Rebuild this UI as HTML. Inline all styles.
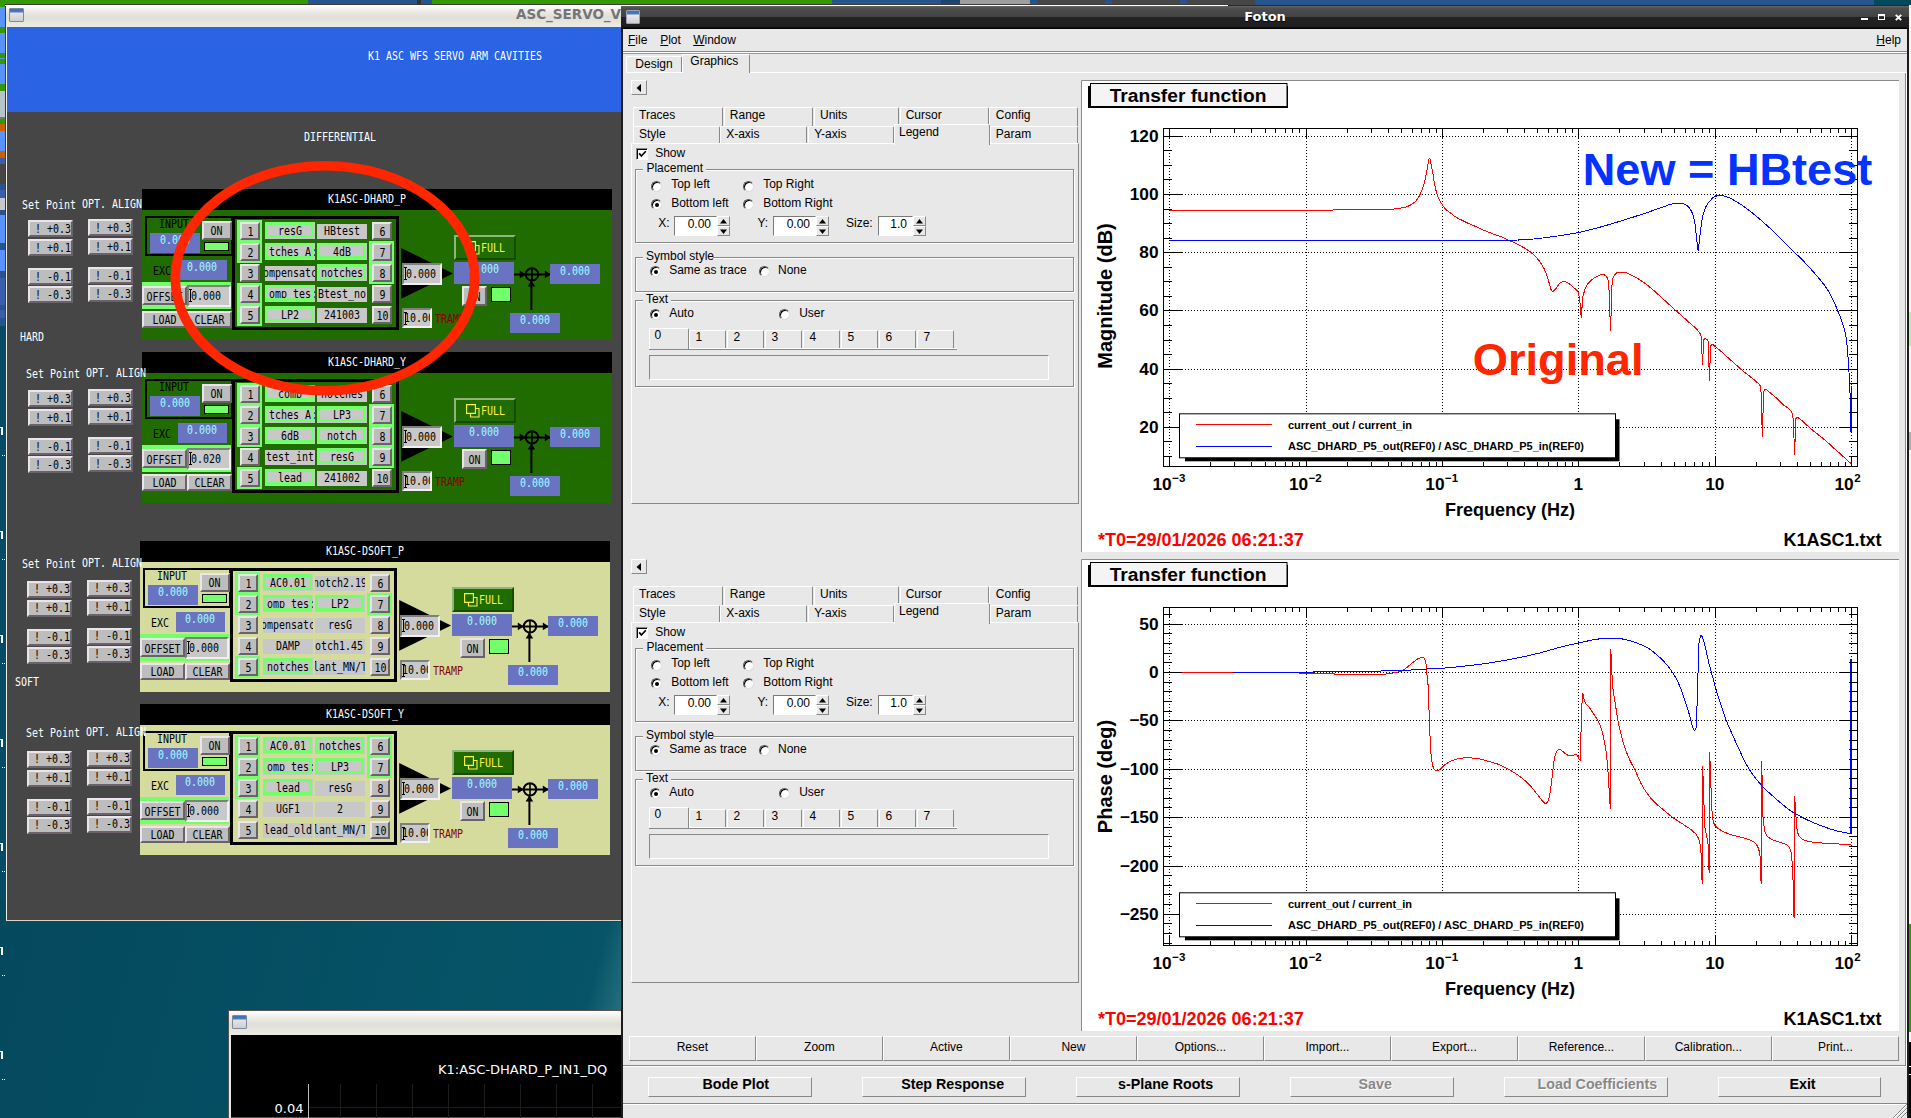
<!DOCTYPE html>
<html><head><meta charset="utf-8"><title>screen</title><style>
html,body{margin:0;padding:0;background:#06506a;}
#s{position:relative;width:1911px;height:1118px;overflow:hidden;font-family:"Liberation Sans",sans-serif;}
#s div,#s svg,#s i,#s span.a{position:absolute;box-sizing:border-box;}
.m{font:12px/12px "DejaVu Sans Mono","Liberation Mono",monospace;white-space:pre;transform:scaleX(0.83);transform-origin:0 0;}
.b{background:#bdbdbd;border:2px solid;border-color:#ebe5eb #6a616a #6a616a #ebe5eb;overflow:hidden;}
.t{background:#c8c8c8;border:2px solid;border-color:#7f7f7f #f0f0f0 #f0f0f0 #7f7f7f;overflow:hidden;}
.fb{background:#216c00;border:2px solid;border-color:#8fb57f #174b00 #174b00 #8fb57f;overflow:hidden;}
.ib{left:0px;top:2px;width:3px;height:13px;border-top:1px solid #000;border-bottom:1px solid #000;background:linear-gradient(90deg,transparent 1px,#000 1px,#000 2px,transparent 2px);}
.wt{font:bold 13.5px/22px "DejaVu Sans","Liberation Sans",sans-serif;white-space:pre;}
.q{font:13px/14px "DejaVu Sans","Liberation Sans",sans-serif;color:#fff;white-space:pre;}

.f{font:12px/14px "Liberation Sans",sans-serif;color:#000;white-space:pre;}
.fbld{font:bold 14.25px/16px "Liberation Sans",sans-serif;color:#000;white-space:pre;text-align:center;}
.rb{background:#e8e8e8;border:1px solid;border-color:#fff #888 #888 #fff;}
.tab{background:#e8e8e8;border:1px solid;border-color:#fff #888 #e8e8e8 #fff;border-bottom:0;border-radius:2px 2px 0 0;}
.grp{border:1px solid #888;box-shadow:1px 1px 0 #fff, inset 1px 1px 0 #fff;}
.ne2{background:#fff;border:1px solid;border-color:#7a7a7a #fff #fff #7a7a7a;}
.ne{background:#fff;border:1px solid;border-color:#888 #fff #fff #888;box-shadow:inset 1px 1px 0 #000;}
.rad{width:11px;height:11px;border-radius:50%;background:#fff;border:1px solid;border-color:#555 #ddd #ddd #555;box-shadow:inset 1px 1px 0 #000;}
.u{text-decoration:underline;}
</style></head><body><div id="s">
<div style="left:0px;top:0px;width:1911px;height:1118px;background:#06506a;background:linear-gradient(100deg,#064a63 0%,#06536b 45%,#0a5f74 75%,#1c6e80 100%);"></div>
<div style="left:0px;top:900px;width:640px;height:218px;background:linear-gradient(105deg,rgba(5,73,94,1) 0%,rgba(5,80,100,1) 55%,rgba(6,84,103,1) 88%,rgba(34,110,124,1) 93%,rgba(30,104,120,1) 100%);"></div>
<div style="left:0px;top:0px;width:1911px;height:5px;background:#339900;"></div>
<div style="left:308px;top:0px;width:109px;height:5px;background:#27548d;"></div>
<div style="left:417px;top:0px;width:4px;height:5px;background:#333;"></div>
<div style="left:421px;top:0px;width:11px;height:5px;background:#27548d;"></div>
<div style="left:832px;top:0px;width:109px;height:5px;background:#27548d;"></div>
<div style="left:941px;top:0px;width:19px;height:5px;background:#1f4470;"></div>
<div style="left:960px;top:0px;width:70px;height:5px;background:#9e9e9e;"></div>
<div style="left:1030px;top:0px;width:7px;height:5px;background:#27548d;"></div>
<div style="left:1037px;top:0px;width:68px;height:5px;background:#464646;"></div>
<div style="left:1105px;top:0px;width:7px;height:5px;background:#27548d;"></div>
<div style="left:1112px;top:0px;width:68px;height:5px;background:#464646;"></div>
<div style="left:1180px;top:0px;width:7px;height:5px;background:#27548d;"></div>
<div style="left:1187px;top:0px;width:68px;height:5px;background:#464646;"></div>
<div style="left:1255px;top:0px;width:619px;height:5px;background:#27548d;"></div>
<div style="left:1874px;top:0px;width:37px;height:5px;background:#054a5c;"></div>
<div style="left:0px;top:0px;width:6px;height:7px;background:#339900;"></div>
<div style="left:0px;top:7px;width:6px;height:20px;background:#5893ff;"></div>
<div style="left:0px;top:27px;width:6px;height:6px;background:#339900;"></div>
<div style="left:0px;top:33px;width:6px;height:20px;background:#5893ff;"></div>
<div style="left:0px;top:53px;width:6px;height:5px;background:#339900;"></div>
<div style="left:0px;top:58px;width:6px;height:1px;background:#5893ff;"></div>
<div style="left:0px;top:59px;width:6px;height:5px;background:#339900;"></div>
<div style="left:0px;top:64px;width:6px;height:20px;background:#5893ff;"></div>
<div style="left:0px;top:84px;width:6px;height:7px;background:#339900;"></div>
<div style="left:0px;top:91px;width:6px;height:26px;background:#b4c4c8;"></div>
<div style="left:0px;top:117px;width:6px;height:2px;background:#777;"></div>
<div style="left:0px;top:119px;width:6px;height:5px;background:#339900;"></div>
<div style="left:0px;top:124px;width:6px;height:7px;background:#cd6100;"></div>
<div style="left:0px;top:131px;width:6px;height:20px;background:#5893ff;"></div>
<div style="left:0px;top:151px;width:6px;height:6.5px;background:#cd6100;"></div>
<div style="left:0px;top:157.5px;width:6px;height:6.5px;background:#3a5eab;"></div>
<div style="left:0px;top:164px;width:6px;height:20px;background:#464646;"></div>
<div style="left:0px;top:184px;width:6px;height:6px;background:#27548d;"></div>
<div style="left:0px;top:190px;width:6px;height:7.5px;background:#3a5eab;"></div>
<div style="left:0px;top:197.5px;width:6px;height:12.5px;background:#c8c8c8;"></div>
<div style="left:0px;top:210px;width:6px;height:5px;background:#27548d;"></div>
<div style="left:0px;top:215px;width:6px;height:27.5px;background:#5893ff;"></div>
<div style="left:0px;top:242.5px;width:6px;height:7.5px;background:#27548d;"></div>
<div style="left:0px;top:250px;width:6px;height:21px;background:#5893ff;"></div>
<div style="left:0px;top:271px;width:6px;height:6.5px;background:#27548d;"></div>
<div style="left:0px;top:277.5px;width:6px;height:27.5px;background:#3a5eab;"></div>
<div style="left:0px;top:305px;width:6px;height:5px;background:#27548d;"></div>
<div style="left:0px;top:310px;width:6px;height:7.5px;background:#3a5eab;"></div>
<div style="left:0px;top:317.5px;width:6px;height:8.5px;background:#27548d;"></div>
<div style="left:0px;top:427px;width:3px;height:1px;background:#fff;"></div>
<div style="left:1px;top:427px;width:2px;height:9px;background:#fff;"></div>
<div style="left:0px;top:435px;width:4px;height:1px;background:#b00;"></div>
<div style="left:2px;top:455px;width:1px;height:1px;background:#fff;"></div>
<div style="left:4px;top:455px;width:1px;height:1px;background:#fff;"></div>
<div style="left:0px;top:531px;width:3px;height:1px;background:#fff;"></div>
<div style="left:1px;top:531px;width:2px;height:9px;background:#fff;"></div>
<div style="left:0px;top:539px;width:4px;height:1px;background:#b00;"></div>
<div style="left:2px;top:559px;width:1px;height:1px;background:#fff;"></div>
<div style="left:4px;top:559px;width:1px;height:1px;background:#fff;"></div>
<div style="left:0px;top:635px;width:3px;height:1px;background:#fff;"></div>
<div style="left:1px;top:635px;width:2px;height:9px;background:#fff;"></div>
<div style="left:0px;top:643px;width:4px;height:1px;background:#b00;"></div>
<div style="left:2px;top:663px;width:1px;height:1px;background:#fff;"></div>
<div style="left:4px;top:663px;width:1px;height:1px;background:#fff;"></div>
<div style="left:0px;top:739px;width:3px;height:1px;background:#fff;"></div>
<div style="left:1px;top:739px;width:2px;height:9px;background:#fff;"></div>
<div style="left:0px;top:747px;width:4px;height:1px;background:#b00;"></div>
<div style="left:2px;top:767px;width:1px;height:1px;background:#fff;"></div>
<div style="left:4px;top:767px;width:1px;height:1px;background:#fff;"></div>
<div style="left:0px;top:843px;width:3px;height:1px;background:#fff;"></div>
<div style="left:1px;top:843px;width:2px;height:9px;background:#fff;"></div>
<div style="left:0px;top:851px;width:4px;height:1px;background:#b00;"></div>
<div style="left:2px;top:871px;width:1px;height:1px;background:#fff;"></div>
<div style="left:4px;top:871px;width:1px;height:1px;background:#fff;"></div>
<div style="left:0px;top:947px;width:3px;height:1px;background:#fff;"></div>
<div style="left:1px;top:947px;width:2px;height:9px;background:#fff;"></div>
<div style="left:0px;top:955px;width:4px;height:1px;background:#b00;"></div>
<div style="left:2px;top:975px;width:1px;height:1px;background:#fff;"></div>
<div style="left:4px;top:975px;width:1px;height:1px;background:#fff;"></div>
<div style="left:0px;top:1051px;width:3px;height:1px;background:#fff;"></div>
<div style="left:1px;top:1051px;width:2px;height:9px;background:#fff;"></div>
<div style="left:0px;top:1059px;width:4px;height:1px;background:#b00;"></div>
<div style="left:2px;top:1079px;width:1px;height:1px;background:#fff;"></div>
<div style="left:4px;top:1079px;width:1px;height:1px;background:#fff;"></div>
<div style="left:5px;top:4px;width:1223px;height:918px;background:#464646;border:1px solid #3c3b37;border-right:0;"></div>
<div style="left:6px;top:5px;width:640px;height:22px;background:linear-gradient(#fff 0%,#e9e8e2 35%,#dfded7 55%,#ecebe4 100%);"></div>
<div style="left:6px;top:27px;width:1px;height:894px;background:#efece6;"></div>
<div style="left:6px;top:920px;width:640px;height:1px;background:#d9d4c6;"></div>
<div style="left:9px;top:8px;width:15px;height:14px;border:1px solid #7b8aa0;border-radius:1px;background:linear-gradient(#3f6fb5 0,#4a7cc4 3px,#e4e4e4 4px,#cfcfcf 100%);"></div>
<div class="wt" style="left:516px;top:3.2px;color:#757575">ASC_SERVO_V</div>
<div style="left:7px;top:27px;width:640px;height:85px;background:#2a63e4;"></div>
<div class="m" style="left:368.4px;top:49.9px;color:#fff">K1 ASC WFS SERVO ARM CAVITIES</div>
<div class="m" style="left:303.5px;top:130.9px;color:#fff">DIFFERENTIAL</div>
<div class="m" style="left:19.8px;top:330.6px;color:#fff">HARD</div>
<div class="m" style="left:15.4px;top:676.2px;color:#fff">SOFT</div>
<div class="b" style="left:28px;top:220px;width:45px;height:17.4px"><div class="m" style="left:5.2px;top:0.6px;color:#000">!</div><div class="m" style="left:17.1px;top:0.6px;color:#000">+0.3</div></div>
<div class="b" style="left:88px;top:219px;width:45px;height:17.4px"><div class="m" style="left:5.2px;top:0.6px;color:#000">!</div><div class="m" style="left:17.1px;top:0.6px;color:#000">+0.3</div></div>
<div class="b" style="left:28px;top:239px;width:45px;height:17.4px"><div class="m" style="left:5.2px;top:0.6px;color:#000">!</div><div class="m" style="left:17.1px;top:0.6px;color:#000">+0.1</div></div>
<div class="b" style="left:88px;top:238px;width:45px;height:17.4px"><div class="m" style="left:5.2px;top:0.6px;color:#000">!</div><div class="m" style="left:17.1px;top:0.6px;color:#000">+0.1</div></div>
<div class="b" style="left:28px;top:268px;width:45px;height:17.4px"><div class="m" style="left:5.2px;top:0.6px;color:#000">!</div><div class="m" style="left:17.1px;top:0.6px;color:#000">-0.1</div></div>
<div class="b" style="left:88px;top:267px;width:45px;height:17.4px"><div class="m" style="left:5.2px;top:0.6px;color:#000">!</div><div class="m" style="left:17.1px;top:0.6px;color:#000">-0.1</div></div>
<div class="b" style="left:28px;top:286px;width:45px;height:17.4px"><div class="m" style="left:5.2px;top:0.6px;color:#000">!</div><div class="m" style="left:17.1px;top:0.6px;color:#000">-0.3</div></div>
<div class="b" style="left:88px;top:285px;width:45px;height:17.4px"><div class="m" style="left:5.2px;top:0.6px;color:#000">!</div><div class="m" style="left:17.1px;top:0.6px;color:#000">-0.3</div></div>
<div class="b" style="left:28px;top:390px;width:45px;height:17.4px"><div class="m" style="left:5.2px;top:0.6px;color:#000">!</div><div class="m" style="left:17.1px;top:0.6px;color:#000">+0.3</div></div>
<div class="b" style="left:88px;top:389px;width:45px;height:17.4px"><div class="m" style="left:5.2px;top:0.6px;color:#000">!</div><div class="m" style="left:17.1px;top:0.6px;color:#000">+0.3</div></div>
<div class="b" style="left:28px;top:409px;width:45px;height:17.4px"><div class="m" style="left:5.2px;top:0.6px;color:#000">!</div><div class="m" style="left:17.1px;top:0.6px;color:#000">+0.1</div></div>
<div class="b" style="left:88px;top:408px;width:45px;height:17.4px"><div class="m" style="left:5.2px;top:0.6px;color:#000">!</div><div class="m" style="left:17.1px;top:0.6px;color:#000">+0.1</div></div>
<div class="b" style="left:28px;top:438px;width:45px;height:17.4px"><div class="m" style="left:5.2px;top:0.6px;color:#000">!</div><div class="m" style="left:17.1px;top:0.6px;color:#000">-0.1</div></div>
<div class="b" style="left:88px;top:437px;width:45px;height:17.4px"><div class="m" style="left:5.2px;top:0.6px;color:#000">!</div><div class="m" style="left:17.1px;top:0.6px;color:#000">-0.1</div></div>
<div class="b" style="left:28px;top:456px;width:45px;height:17.4px"><div class="m" style="left:5.2px;top:0.6px;color:#000">!</div><div class="m" style="left:17.1px;top:0.6px;color:#000">-0.3</div></div>
<div class="b" style="left:88px;top:455px;width:45px;height:17.4px"><div class="m" style="left:5.2px;top:0.6px;color:#000">!</div><div class="m" style="left:17.1px;top:0.6px;color:#000">-0.3</div></div>
<div class="b" style="left:27px;top:580.5px;width:45px;height:17.4px"><div class="m" style="left:5.2px;top:0.6px;color:#000">!</div><div class="m" style="left:17.1px;top:0.6px;color:#000">+0.3</div></div>
<div class="b" style="left:87px;top:579.5px;width:45px;height:17.4px"><div class="m" style="left:5.2px;top:0.6px;color:#000">!</div><div class="m" style="left:17.1px;top:0.6px;color:#000">+0.3</div></div>
<div class="b" style="left:27px;top:599.5px;width:45px;height:17.4px"><div class="m" style="left:5.2px;top:0.6px;color:#000">!</div><div class="m" style="left:17.1px;top:0.6px;color:#000">+0.1</div></div>
<div class="b" style="left:87px;top:598.5px;width:45px;height:17.4px"><div class="m" style="left:5.2px;top:0.6px;color:#000">!</div><div class="m" style="left:17.1px;top:0.6px;color:#000">+0.1</div></div>
<div class="b" style="left:27px;top:628.5px;width:45px;height:17.4px"><div class="m" style="left:5.2px;top:0.6px;color:#000">!</div><div class="m" style="left:17.1px;top:0.6px;color:#000">-0.1</div></div>
<div class="b" style="left:87px;top:627.5px;width:45px;height:17.4px"><div class="m" style="left:5.2px;top:0.6px;color:#000">!</div><div class="m" style="left:17.1px;top:0.6px;color:#000">-0.1</div></div>
<div class="b" style="left:27px;top:646.5px;width:45px;height:17.4px"><div class="m" style="left:5.2px;top:0.6px;color:#000">!</div><div class="m" style="left:17.1px;top:0.6px;color:#000">-0.3</div></div>
<div class="b" style="left:87px;top:645.5px;width:45px;height:17.4px"><div class="m" style="left:5.2px;top:0.6px;color:#000">!</div><div class="m" style="left:17.1px;top:0.6px;color:#000">-0.3</div></div>
<div class="b" style="left:27px;top:750.5px;width:45px;height:17.4px"><div class="m" style="left:5.2px;top:0.6px;color:#000">!</div><div class="m" style="left:17.1px;top:0.6px;color:#000">+0.3</div></div>
<div class="b" style="left:87px;top:749.5px;width:45px;height:17.4px"><div class="m" style="left:5.2px;top:0.6px;color:#000">!</div><div class="m" style="left:17.1px;top:0.6px;color:#000">+0.3</div></div>
<div class="b" style="left:27px;top:769.5px;width:45px;height:17.4px"><div class="m" style="left:5.2px;top:0.6px;color:#000">!</div><div class="m" style="left:17.1px;top:0.6px;color:#000">+0.1</div></div>
<div class="b" style="left:87px;top:768.5px;width:45px;height:17.4px"><div class="m" style="left:5.2px;top:0.6px;color:#000">!</div><div class="m" style="left:17.1px;top:0.6px;color:#000">+0.1</div></div>
<div class="b" style="left:27px;top:798.5px;width:45px;height:17.4px"><div class="m" style="left:5.2px;top:0.6px;color:#000">!</div><div class="m" style="left:17.1px;top:0.6px;color:#000">-0.1</div></div>
<div class="b" style="left:87px;top:797.5px;width:45px;height:17.4px"><div class="m" style="left:5.2px;top:0.6px;color:#000">!</div><div class="m" style="left:17.1px;top:0.6px;color:#000">-0.1</div></div>
<div class="b" style="left:27px;top:816.5px;width:45px;height:17.4px"><div class="m" style="left:5.2px;top:0.6px;color:#000">!</div><div class="m" style="left:17.1px;top:0.6px;color:#000">-0.3</div></div>
<div class="b" style="left:87px;top:815.5px;width:45px;height:17.4px"><div class="m" style="left:5.2px;top:0.6px;color:#000">!</div><div class="m" style="left:17.1px;top:0.6px;color:#000">-0.3</div></div>
<div style="left:142px;top:189px;width:470px;height:21px;background:#000;"></div>
<div style="left:142px;top:210px;width:470px;height:130px;background:#216c00;"></div>
<div class="m" style="left:327.5px;top:192.8px;color:#fff">K1ASC-DHARD_P</div>
<div style="left:145px;top:216px;width:88px;height:40px;border:2px solid #000;"></div>
<div class="m" style="left:159.3px;top:217.9px;color:#000">INPUT</div>
<div style="left:150px;top:233px;width:50px;height:19.5px;background:#6a73c1;"></div>
<div class="m" style="left:160px;top:234px;color:#99ffff">0.000</div>
<div class="b" style="left:202px;top:221.2px;width:29.5px;height:19.2px"><div class="m" style="left:-111.75px;top:2px;width:300px;text-align:center;color:#000">ON</div></div>
<div style="left:204px;top:241.5px;width:25px;height:9.5px;background:#73ff6b;border:1px solid #000;"></div>
<div class="m" style="left:153px;top:265.1px;color:#000">EXC</div>
<div style="left:177.5px;top:260px;width:49.5px;height:19.5px;background:#6a73c1;"></div>
<div class="m" style="left:187.25px;top:261px;color:#99ffff">0.000</div>
<div style="left:142px;top:282.3px;width:89px;height:27.2px;background:#73ff6b;"></div>
<div class="b" style="left:142px;top:286px;width:44.5px;height:19px"><div class="m" style="left:-104.25px;top:2.5px;width:300px;text-align:center;color:#000">OFFSET</div></div>
<div class="t" style="left:187px;top:285px;width:43.5px;height:21.5px"><div class="m" style="left:2.4px;top:2.75px;color:#000">0.000</div><i class="ib"></i></div>
<div class="b" style="left:142px;top:311px;width:44.5px;height:17px"><div class="m" style="left:-104.25px;top:0.5px;width:300px;text-align:center;color:#000">LOAD</div></div>
<div class="b" style="left:187px;top:311px;width:44.5px;height:17px"><div class="m" style="left:-104.25px;top:0.5px;width:300px;text-align:center;color:#000">CLEAR</div></div>
<div style="left:232px;top:216px;width:167px;height:114px;border:3px solid #000;"></div>
<div style="left:237px;top:219.5px;width:25px;height:22px;background:#73ff6b;"></div>
<div style="left:237px;top:240.5px;width:25px;height:22px;background:#73ff6b;"></div>
<div style="left:369px;top:240.5px;width:25px;height:22px;background:#73ff6b;"></div>
<div style="left:369px;top:261.5px;width:25px;height:22px;background:#73ff6b;"></div>
<div style="left:237px;top:282.5px;width:25px;height:22px;background:#73ff6b;"></div>
<div style="left:237px;top:303.5px;width:25px;height:22px;background:#73ff6b;"></div>
<div class="b" style="left:240px;top:222px;width:20px;height:18px"><div class="m" style="left:-116.5px;top:2px;width:300px;text-align:center;color:#000">1</div></div>
<div class="b" style="left:372px;top:222px;width:20px;height:18px"><div class="m" style="left:-116.5px;top:2px;width:300px;text-align:center;color:#000">6</div></div>
<div style="left:265px;top:222px;width:50px;height:17px;background:#c8c8c8;"></div>
<div style="left:265px;top:225px;width:50px;height:10px;overflow:hidden;"><div class="m" style="left:-141px;top:0.3px;width:400px;text-align:center;color:#000">resG</div></div>
<div style="left:265px;top:222px;width:49px;height:15.5px;border:3px solid #73ff6b;"></div>
<div style="left:317px;top:224px;width:50px;height:14.5px;overflow:hidden;background:#c8c8c8;"><div class="m" style="left:-141px;top:0.85px;width:400px;text-align:center;color:#000">HBtest</div></div>
<div class="b" style="left:240px;top:243px;width:20px;height:18px"><div class="m" style="left:-116.5px;top:2px;width:300px;text-align:center;color:#000">2</div></div>
<div class="b" style="left:372px;top:243px;width:20px;height:18px"><div class="m" style="left:-116.5px;top:2px;width:300px;text-align:center;color:#000">7</div></div>
<div style="left:265px;top:243px;width:50px;height:17px;background:#c8c8c8;"></div>
<div style="left:265px;top:246px;width:50px;height:10px;overflow:hidden;"><div class="m" style="left:-138px;top:0.3px;width:400px;text-align:center;color:#000">tches A:</div></div>
<div style="left:265px;top:243px;width:49px;height:15.5px;border:3px solid #73ff6b;"></div>
<div style="left:317px;top:243px;width:50px;height:17px;background:#c8c8c8;"></div>
<div style="left:317px;top:246px;width:50px;height:10px;overflow:hidden;"><div class="m" style="left:-141px;top:0.3px;width:400px;text-align:center;color:#000">4dB</div></div>
<div style="left:317px;top:243px;width:49px;height:15.5px;border:3px solid #73ff6b;"></div>
<div class="b" style="left:240px;top:264px;width:20px;height:18px"><div class="m" style="left:-116.5px;top:2px;width:300px;text-align:center;color:#000">3</div></div>
<div class="b" style="left:372px;top:264px;width:20px;height:18px"><div class="m" style="left:-116.5px;top:2px;width:300px;text-align:center;color:#000">8</div></div>
<div style="left:265px;top:266px;width:50px;height:14.5px;overflow:hidden;background:#c8c8c8;"><div class="m" style="left:-141px;top:0.85px;width:400px;text-align:center;color:#000">ompensatc</div></div>
<div style="left:317px;top:264px;width:50px;height:17px;background:#c8c8c8;"></div>
<div style="left:317px;top:267px;width:50px;height:10px;overflow:hidden;"><div class="m" style="left:-141px;top:0.3px;width:400px;text-align:center;color:#000">notches</div></div>
<div style="left:317px;top:264px;width:49px;height:15.5px;border:3px solid #73ff6b;"></div>
<div class="b" style="left:240px;top:285px;width:20px;height:18px"><div class="m" style="left:-116.5px;top:2px;width:300px;text-align:center;color:#000">4</div></div>
<div class="b" style="left:372px;top:285px;width:20px;height:18px"><div class="m" style="left:-116.5px;top:2px;width:300px;text-align:center;color:#000">9</div></div>
<div style="left:265px;top:285px;width:50px;height:17px;background:#c8c8c8;"></div>
<div style="left:265px;top:288px;width:50px;height:10px;overflow:hidden;"><div class="m" style="left:-138px;top:0.3px;width:400px;text-align:center;color:#000">omp_tes:</div></div>
<div style="left:265px;top:285px;width:49px;height:15.5px;border:3px solid #73ff6b;"></div>
<div style="left:317px;top:287px;width:50px;height:14.5px;overflow:hidden;background:#c8c8c8;"><div class="m" style="left:-141px;top:0.85px;width:400px;text-align:center;color:#000">Btest_no</div></div>
<div class="b" style="left:240px;top:306px;width:20px;height:18px"><div class="m" style="left:-116.5px;top:2px;width:300px;text-align:center;color:#000">5</div></div>
<div class="b" style="left:372px;top:306px;width:20px;height:18px"><div class="m" style="left:-116.5px;top:2px;width:300px;text-align:center;color:#000">10</div></div>
<div style="left:265px;top:306px;width:50px;height:17px;background:#c8c8c8;"></div>
<div style="left:265px;top:309px;width:50px;height:10px;overflow:hidden;"><div class="m" style="left:-141px;top:0.3px;width:400px;text-align:center;color:#000">LP2</div></div>
<div style="left:265px;top:306px;width:49px;height:15.5px;border:3px solid #73ff6b;"></div>
<div style="left:317px;top:308px;width:50px;height:14.5px;overflow:hidden;background:#c8c8c8;"><div class="m" style="left:-141px;top:0.85px;width:400px;text-align:center;color:#000">241003</div></div>
<svg style="left:401px;top:247px" width="54" height="54" viewBox="0 0 54 54"><polygon points="0.2,1 0.2,51.8 52,26.4" fill="#000"/></svg>
<div class="t" style="left:402px;top:263px;width:40px;height:22px"><div class="m" style="left:2.4px;top:3px;color:#000">0.000</div><i class="ib"></i></div>
<div class="fb" style="left:454px;top:235px;width:62px;height:24.5px"><svg style="left:10px;top:4px" width="16" height="14" viewBox="0 0 16 14"><path d="M4.5 4.5h8.5v8.5h-8.5z" fill="none" stroke="#fbf34a" stroke-width="1.1"/><path d="M0.6 0.6h8.8v8.8h-8.8z" fill="#216c00" stroke="#fbf34a" stroke-width="1.1"/></svg><div class="m" style="left:24.5px;top:5px;color:#fbf34a">FULL</div></div>
<div style="left:454px;top:262.3px;width:60px;height:21.5px;background:#6a73c1;"></div>
<div class="m" style="left:469px;top:263.3px;color:#99ffff">0.000</div>
<svg style="left:514px;top:263px" width="40" height="50" viewBox="0 0 40 50"><g stroke="#000" stroke-width="2" fill="none"><path d="M0 11.4H36"/><circle cx="18" cy="11.4" r="6.2"/><path d="M18 5v12.8" stroke-width="1.6"/><path d="M17.4 47V18"/></g><path d="M11.8 11.4l-6-3.8v7.6z M36.8 11.4l-6-3.8v7.6z M17.4 17.6l-3.8 6h7.6z" fill="#000"/></svg>
<div style="left:550px;top:264px;width:50px;height:20px;background:#6a73c1;"></div>
<div class="m" style="left:560px;top:265px;color:#99ffff">0.000</div>
<div style="left:510px;top:313px;width:50px;height:19.7px;background:#6a73c1;"></div>
<div class="m" style="left:520px;top:314px;color:#99ffff">0.000</div>
<div class="b" style="left:462px;top:286px;width:25px;height:20px"><div class="m" style="left:-114px;top:3px;width:300px;text-align:center;color:#000">ON</div></div>
<div style="left:491px;top:287px;width:20px;height:15px;background:#73ff6b;border:1px solid #000;"></div>
<div class="t" style="left:402px;top:308px;width:30px;height:20px"><div class="m" style="left:0px;top:2px;color:#000">10.00</div><i class="ib"></i></div>
<div class="m" style="left:435px;top:313.1px;color:#820400">TRAMP</div>
<div style="left:142px;top:352px;width:470px;height:21px;background:#000;"></div>
<div style="left:142px;top:373px;width:470px;height:130px;background:#216c00;"></div>
<div class="m" style="left:327.5px;top:355.8px;color:#fff">K1ASC-DHARD_Y</div>
<div style="left:145px;top:379px;width:88px;height:40px;border:2px solid #000;"></div>
<div class="m" style="left:159.3px;top:380.9px;color:#000">INPUT</div>
<div style="left:150px;top:396px;width:50px;height:19.5px;background:#6a73c1;"></div>
<div class="m" style="left:160px;top:397px;color:#99ffff">0.000</div>
<div class="b" style="left:202px;top:384.2px;width:29.5px;height:19.2px"><div class="m" style="left:-111.75px;top:2px;width:300px;text-align:center;color:#000">ON</div></div>
<div style="left:204px;top:404.5px;width:25px;height:9.5px;background:#73ff6b;border:1px solid #000;"></div>
<div class="m" style="left:153px;top:428.1px;color:#000">EXC</div>
<div style="left:177.5px;top:423px;width:49.5px;height:19.5px;background:#6a73c1;"></div>
<div class="m" style="left:187.25px;top:424px;color:#99ffff">0.000</div>
<div style="left:142px;top:445.3px;width:89px;height:27.2px;background:#73ff6b;"></div>
<div class="b" style="left:142px;top:449px;width:44.5px;height:19px"><div class="m" style="left:-104.25px;top:2.5px;width:300px;text-align:center;color:#000">OFFSET</div></div>
<div class="t" style="left:187px;top:448px;width:43.5px;height:21.5px"><div class="m" style="left:2.4px;top:2.75px;color:#000">0.020</div><i class="ib"></i></div>
<div class="b" style="left:142px;top:474px;width:44.5px;height:17px"><div class="m" style="left:-104.25px;top:0.5px;width:300px;text-align:center;color:#000">LOAD</div></div>
<div class="b" style="left:187px;top:474px;width:44.5px;height:17px"><div class="m" style="left:-104.25px;top:0.5px;width:300px;text-align:center;color:#000">CLEAR</div></div>
<div style="left:232px;top:379px;width:167px;height:114px;border:3px solid #000;"></div>
<div style="left:237px;top:382.5px;width:25px;height:22px;background:#73ff6b;"></div>
<div style="left:237px;top:403.5px;width:25px;height:22px;background:#73ff6b;"></div>
<div style="left:369px;top:403.5px;width:25px;height:22px;background:#73ff6b;"></div>
<div style="left:237px;top:424.5px;width:25px;height:22px;background:#73ff6b;"></div>
<div style="left:369px;top:424.5px;width:25px;height:22px;background:#73ff6b;"></div>
<div style="left:369px;top:445.5px;width:25px;height:22px;background:#73ff6b;"></div>
<div style="left:237px;top:466.5px;width:25px;height:22px;background:#73ff6b;"></div>
<div class="b" style="left:240px;top:385px;width:20px;height:18px"><div class="m" style="left:-116.5px;top:2px;width:300px;text-align:center;color:#000">1</div></div>
<div class="b" style="left:372px;top:385px;width:20px;height:18px"><div class="m" style="left:-116.5px;top:2px;width:300px;text-align:center;color:#000">6</div></div>
<div style="left:265px;top:385px;width:50px;height:17px;background:#c8c8c8;"></div>
<div style="left:265px;top:388px;width:50px;height:10px;overflow:hidden;"><div class="m" style="left:-141px;top:0.3px;width:400px;text-align:center;color:#000">comp</div></div>
<div style="left:265px;top:385px;width:49px;height:15.5px;border:3px solid #73ff6b;"></div>
<div style="left:317px;top:387px;width:50px;height:14.5px;overflow:hidden;background:#c8c8c8;"><div class="m" style="left:-141px;top:0.85px;width:400px;text-align:center;color:#000">notches</div></div>
<div class="b" style="left:240px;top:406px;width:20px;height:18px"><div class="m" style="left:-116.5px;top:2px;width:300px;text-align:center;color:#000">2</div></div>
<div class="b" style="left:372px;top:406px;width:20px;height:18px"><div class="m" style="left:-116.5px;top:2px;width:300px;text-align:center;color:#000">7</div></div>
<div style="left:265px;top:406px;width:50px;height:17px;background:#c8c8c8;"></div>
<div style="left:265px;top:409px;width:50px;height:10px;overflow:hidden;"><div class="m" style="left:-138px;top:0.3px;width:400px;text-align:center;color:#000">tches A:</div></div>
<div style="left:265px;top:406px;width:49px;height:15.5px;border:3px solid #73ff6b;"></div>
<div style="left:317px;top:406px;width:50px;height:17px;background:#c8c8c8;"></div>
<div style="left:317px;top:409px;width:50px;height:10px;overflow:hidden;"><div class="m" style="left:-141px;top:0.3px;width:400px;text-align:center;color:#000">LP3</div></div>
<div style="left:317px;top:406px;width:49px;height:15.5px;border:3px solid #73ff6b;"></div>
<div class="b" style="left:240px;top:427px;width:20px;height:18px"><div class="m" style="left:-116.5px;top:2px;width:300px;text-align:center;color:#000">3</div></div>
<div class="b" style="left:372px;top:427px;width:20px;height:18px"><div class="m" style="left:-116.5px;top:2px;width:300px;text-align:center;color:#000">8</div></div>
<div style="left:265px;top:427px;width:50px;height:17px;background:#c8c8c8;"></div>
<div style="left:265px;top:430px;width:50px;height:10px;overflow:hidden;"><div class="m" style="left:-141px;top:0.3px;width:400px;text-align:center;color:#000">6dB</div></div>
<div style="left:265px;top:427px;width:49px;height:15.5px;border:3px solid #73ff6b;"></div>
<div style="left:317px;top:427px;width:50px;height:17px;background:#c8c8c8;"></div>
<div style="left:317px;top:430px;width:50px;height:10px;overflow:hidden;"><div class="m" style="left:-141px;top:0.3px;width:400px;text-align:center;color:#000">notch</div></div>
<div style="left:317px;top:427px;width:49px;height:15.5px;border:3px solid #73ff6b;"></div>
<div class="b" style="left:240px;top:448px;width:20px;height:18px"><div class="m" style="left:-116.5px;top:2px;width:300px;text-align:center;color:#000">4</div></div>
<div class="b" style="left:372px;top:448px;width:20px;height:18px"><div class="m" style="left:-116.5px;top:2px;width:300px;text-align:center;color:#000">9</div></div>
<div style="left:265px;top:450px;width:50px;height:14.5px;overflow:hidden;background:#c8c8c8;"><div class="m" style="left:-141px;top:0.85px;width:400px;text-align:center;color:#000">test_int</div></div>
<div style="left:317px;top:448px;width:50px;height:17px;background:#c8c8c8;"></div>
<div style="left:317px;top:451px;width:50px;height:10px;overflow:hidden;"><div class="m" style="left:-141px;top:0.3px;width:400px;text-align:center;color:#000">resG</div></div>
<div style="left:317px;top:448px;width:49px;height:15.5px;border:3px solid #73ff6b;"></div>
<div class="b" style="left:240px;top:469px;width:20px;height:18px"><div class="m" style="left:-116.5px;top:2px;width:300px;text-align:center;color:#000">5</div></div>
<div class="b" style="left:372px;top:469px;width:20px;height:18px"><div class="m" style="left:-116.5px;top:2px;width:300px;text-align:center;color:#000">10</div></div>
<div style="left:265px;top:469px;width:50px;height:17px;background:#c8c8c8;"></div>
<div style="left:265px;top:472px;width:50px;height:10px;overflow:hidden;"><div class="m" style="left:-141px;top:0.3px;width:400px;text-align:center;color:#000">lead</div></div>
<div style="left:265px;top:469px;width:49px;height:15.5px;border:3px solid #73ff6b;"></div>
<div style="left:317px;top:471px;width:50px;height:14.5px;overflow:hidden;background:#c8c8c8;"><div class="m" style="left:-141px;top:0.85px;width:400px;text-align:center;color:#000">241002</div></div>
<svg style="left:401px;top:410px" width="54" height="54" viewBox="0 0 54 54"><polygon points="0.2,1 0.2,51.8 52,26.4" fill="#000"/></svg>
<div class="t" style="left:402px;top:426px;width:40px;height:22px"><div class="m" style="left:2.4px;top:3px;color:#000">0.000</div><i class="ib"></i></div>
<div class="fb" style="left:454px;top:398px;width:62px;height:24.5px"><svg style="left:10px;top:4px" width="16" height="14" viewBox="0 0 16 14"><path d="M4.5 4.5h8.5v8.5h-8.5z" fill="none" stroke="#fbf34a" stroke-width="1.1"/><path d="M0.6 0.6h8.8v8.8h-8.8z" fill="#216c00" stroke="#fbf34a" stroke-width="1.1"/></svg><div class="m" style="left:24.5px;top:5px;color:#fbf34a">FULL</div></div>
<div style="left:454px;top:425.3px;width:60px;height:21.5px;background:#6a73c1;"></div>
<div class="m" style="left:469px;top:426.3px;color:#99ffff">0.000</div>
<svg style="left:514px;top:426px" width="40" height="50" viewBox="0 0 40 50"><g stroke="#000" stroke-width="2" fill="none"><path d="M0 11.4H36"/><circle cx="18" cy="11.4" r="6.2"/><path d="M18 5v12.8" stroke-width="1.6"/><path d="M17.4 47V18"/></g><path d="M11.8 11.4l-6-3.8v7.6z M36.8 11.4l-6-3.8v7.6z M17.4 17.6l-3.8 6h7.6z" fill="#000"/></svg>
<div style="left:550px;top:427px;width:50px;height:20px;background:#6a73c1;"></div>
<div class="m" style="left:560px;top:428px;color:#99ffff">0.000</div>
<div style="left:510px;top:476px;width:50px;height:19.7px;background:#6a73c1;"></div>
<div class="m" style="left:520px;top:477px;color:#99ffff">0.000</div>
<div class="b" style="left:462px;top:449px;width:25px;height:20px"><div class="m" style="left:-114px;top:3px;width:300px;text-align:center;color:#000">ON</div></div>
<div style="left:491px;top:450px;width:20px;height:15px;background:#73ff6b;border:1px solid #000;"></div>
<div class="t" style="left:402px;top:471px;width:30px;height:20px"><div class="m" style="left:0px;top:2px;color:#000">10.00</div><i class="ib"></i></div>
<div class="m" style="left:435px;top:476.1px;color:#820400">TRAMP</div>
<div style="left:140px;top:541px;width:470px;height:21px;background:#000;"></div>
<div style="left:140px;top:562px;width:470px;height:130px;background:#d4db9d;"></div>
<div class="m" style="left:325.5px;top:544.8px;color:#fff">K1ASC-DSOFT_P</div>
<div style="left:143px;top:568px;width:88px;height:40px;border:2px solid #000;"></div>
<div class="m" style="left:157.3px;top:569.9px;color:#000">INPUT</div>
<div style="left:148px;top:585px;width:50px;height:19.5px;background:#6a73c1;"></div>
<div class="m" style="left:158px;top:586px;color:#99ffff">0.000</div>
<div class="b" style="left:200px;top:573.2px;width:29.5px;height:19.2px"><div class="m" style="left:-111.75px;top:2px;width:300px;text-align:center;color:#000">ON</div></div>
<div style="left:202px;top:593.5px;width:25px;height:9.5px;background:#73ff6b;border:1px solid #000;"></div>
<div class="m" style="left:151px;top:617.1px;color:#000">EXC</div>
<div style="left:175.5px;top:612px;width:49.5px;height:19.5px;background:#6a73c1;"></div>
<div class="m" style="left:185.25px;top:613px;color:#99ffff">0.000</div>
<div style="left:140px;top:634.3px;width:89px;height:27.2px;background:#73ff6b;"></div>
<div class="b" style="left:140px;top:638px;width:44.5px;height:19px"><div class="m" style="left:-104.25px;top:2.5px;width:300px;text-align:center;color:#000">OFFSET</div></div>
<div class="t" style="left:185px;top:637px;width:43.5px;height:21.5px"><div class="m" style="left:2.4px;top:2.75px;color:#000">0.000</div><i class="ib"></i></div>
<div class="b" style="left:140px;top:663px;width:44.5px;height:17px"><div class="m" style="left:-104.25px;top:0.5px;width:300px;text-align:center;color:#000">LOAD</div></div>
<div class="b" style="left:185px;top:663px;width:44.5px;height:17px"><div class="m" style="left:-104.25px;top:0.5px;width:300px;text-align:center;color:#000">CLEAR</div></div>
<div style="left:230px;top:568px;width:167px;height:114px;border:3px solid #000;"></div>
<div style="left:235px;top:571.5px;width:25px;height:22px;background:#73ff6b;"></div>
<div style="left:235px;top:592.5px;width:25px;height:22px;background:#73ff6b;"></div>
<div style="left:367px;top:592.5px;width:25px;height:22px;background:#73ff6b;"></div>
<div style="left:235px;top:655.5px;width:25px;height:22px;background:#73ff6b;"></div>
<div class="b" style="left:238px;top:574px;width:20px;height:18px"><div class="m" style="left:-116.5px;top:2px;width:300px;text-align:center;color:#000">1</div></div>
<div class="b" style="left:370px;top:574px;width:20px;height:18px"><div class="m" style="left:-116.5px;top:2px;width:300px;text-align:center;color:#000">6</div></div>
<div style="left:263px;top:574px;width:50px;height:17px;background:#c8c8c8;"></div>
<div style="left:263px;top:577px;width:50px;height:10px;overflow:hidden;"><div class="m" style="left:-141px;top:0.3px;width:400px;text-align:center;color:#000">AC0.01</div></div>
<div style="left:263px;top:574px;width:49px;height:15.5px;border:3px solid #73ff6b;"></div>
<div style="left:315px;top:576px;width:50px;height:14.5px;overflow:hidden;background:#c8c8c8;"><div class="m" style="left:-141px;top:0.85px;width:400px;text-align:center;color:#000">notch2.19</div></div>
<div class="b" style="left:238px;top:595px;width:20px;height:18px"><div class="m" style="left:-116.5px;top:2px;width:300px;text-align:center;color:#000">2</div></div>
<div class="b" style="left:370px;top:595px;width:20px;height:18px"><div class="m" style="left:-116.5px;top:2px;width:300px;text-align:center;color:#000">7</div></div>
<div style="left:263px;top:595px;width:50px;height:17px;background:#c8c8c8;"></div>
<div style="left:263px;top:598px;width:50px;height:10px;overflow:hidden;"><div class="m" style="left:-138px;top:0.3px;width:400px;text-align:center;color:#000">omp_tes:</div></div>
<div style="left:263px;top:595px;width:49px;height:15.5px;border:3px solid #73ff6b;"></div>
<div style="left:315px;top:595px;width:50px;height:17px;background:#c8c8c8;"></div>
<div style="left:315px;top:598px;width:50px;height:10px;overflow:hidden;"><div class="m" style="left:-141px;top:0.3px;width:400px;text-align:center;color:#000">LP2</div></div>
<div style="left:315px;top:595px;width:49px;height:15.5px;border:3px solid #73ff6b;"></div>
<div class="b" style="left:238px;top:616px;width:20px;height:18px"><div class="m" style="left:-116.5px;top:2px;width:300px;text-align:center;color:#000">3</div></div>
<div class="b" style="left:370px;top:616px;width:20px;height:18px"><div class="m" style="left:-116.5px;top:2px;width:300px;text-align:center;color:#000">8</div></div>
<div style="left:263px;top:618px;width:50px;height:14.5px;overflow:hidden;background:#c8c8c8;"><div class="m" style="left:-141px;top:0.85px;width:400px;text-align:center;color:#000">ompensatc</div></div>
<div style="left:315px;top:618px;width:50px;height:14.5px;overflow:hidden;background:#c8c8c8;"><div class="m" style="left:-141px;top:0.85px;width:400px;text-align:center;color:#000">resG</div></div>
<div class="b" style="left:238px;top:637px;width:20px;height:18px"><div class="m" style="left:-116.5px;top:2px;width:300px;text-align:center;color:#000">4</div></div>
<div class="b" style="left:370px;top:637px;width:20px;height:18px"><div class="m" style="left:-116.5px;top:2px;width:300px;text-align:center;color:#000">9</div></div>
<div style="left:263px;top:639px;width:50px;height:14.5px;overflow:hidden;background:#c8c8c8;"><div class="m" style="left:-141px;top:0.85px;width:400px;text-align:center;color:#000">DAMP</div></div>
<div style="left:315px;top:639px;width:50px;height:14.5px;overflow:hidden;background:#c8c8c8;"><div class="m" style="left:-138.6px;top:0.85px;width:400px;text-align:center;color:#000">otch1.45:</div></div>
<div class="b" style="left:238px;top:658px;width:20px;height:18px"><div class="m" style="left:-116.5px;top:2px;width:300px;text-align:center;color:#000">5</div></div>
<div class="b" style="left:370px;top:658px;width:20px;height:18px"><div class="m" style="left:-116.5px;top:2px;width:300px;text-align:center;color:#000">10</div></div>
<div style="left:263px;top:658px;width:50px;height:17px;background:#c8c8c8;"></div>
<div style="left:263px;top:661px;width:50px;height:10px;overflow:hidden;"><div class="m" style="left:-141px;top:0.3px;width:400px;text-align:center;color:#000">notches</div></div>
<div style="left:263px;top:658px;width:49px;height:15.5px;border:3px solid #73ff6b;"></div>
<div style="left:315px;top:660px;width:50px;height:14.5px;overflow:hidden;background:#c8c8c8;"><div class="m" style="left:-141px;top:0.85px;width:400px;text-align:center;color:#000">lant_MN/T</div></div>
<svg style="left:399px;top:599px" width="54" height="54" viewBox="0 0 54 54"><polygon points="0.2,1 0.2,51.8 52,26.4" fill="#000"/></svg>
<div class="t" style="left:400px;top:615px;width:40px;height:22px"><div class="m" style="left:2.4px;top:3px;color:#000">0.000</div><i class="ib"></i></div>
<div class="fb" style="left:452px;top:587px;width:62px;height:24.5px"><svg style="left:10px;top:4px" width="16" height="14" viewBox="0 0 16 14"><path d="M4.5 4.5h8.5v8.5h-8.5z" fill="none" stroke="#fbf34a" stroke-width="1.1"/><path d="M0.6 0.6h8.8v8.8h-8.8z" fill="#216c00" stroke="#fbf34a" stroke-width="1.1"/></svg><div class="m" style="left:24.5px;top:5px;color:#fbf34a">FULL</div></div>
<div style="left:452px;top:614.3px;width:60px;height:21.5px;background:#6a73c1;"></div>
<div class="m" style="left:467px;top:615.3px;color:#99ffff">0.000</div>
<svg style="left:512px;top:615px" width="40" height="50" viewBox="0 0 40 50"><g stroke="#000" stroke-width="2" fill="none"><path d="M0 11.4H36"/><circle cx="18" cy="11.4" r="6.2"/><path d="M18 5v12.8" stroke-width="1.6"/><path d="M17.4 47V18"/></g><path d="M11.8 11.4l-6-3.8v7.6z M36.8 11.4l-6-3.8v7.6z M17.4 17.6l-3.8 6h7.6z" fill="#000"/></svg>
<div style="left:548px;top:616px;width:50px;height:20px;background:#6a73c1;"></div>
<div class="m" style="left:558px;top:617px;color:#99ffff">0.000</div>
<div style="left:508px;top:665px;width:50px;height:19.7px;background:#6a73c1;"></div>
<div class="m" style="left:518px;top:666px;color:#99ffff">0.000</div>
<div class="b" style="left:460px;top:638px;width:25px;height:20px"><div class="m" style="left:-114px;top:3px;width:300px;text-align:center;color:#000">ON</div></div>
<div style="left:489px;top:639px;width:20px;height:15px;background:#73ff6b;border:1px solid #000;"></div>
<div class="t" style="left:400px;top:660px;width:30px;height:20px"><div class="m" style="left:0px;top:2px;color:#000">10.00</div><i class="ib"></i></div>
<div class="m" style="left:433px;top:665.1px;color:#820400">TRAMP</div>
<div style="left:140px;top:704px;width:470px;height:21px;background:#000;"></div>
<div style="left:140px;top:725px;width:470px;height:130px;background:#d4db9d;"></div>
<div class="m" style="left:325.5px;top:707.8px;color:#fff">K1ASC-DSOFT_Y</div>
<div style="left:143px;top:731px;width:88px;height:40px;border:2px solid #000;"></div>
<div class="m" style="left:157.3px;top:732.9px;color:#000">INPUT</div>
<div style="left:148px;top:748px;width:50px;height:19.5px;background:#6a73c1;"></div>
<div class="m" style="left:158px;top:749px;color:#99ffff">0.000</div>
<div class="b" style="left:200px;top:736.2px;width:29.5px;height:19.2px"><div class="m" style="left:-111.75px;top:2px;width:300px;text-align:center;color:#000">ON</div></div>
<div style="left:202px;top:756.5px;width:25px;height:9.5px;background:#73ff6b;border:1px solid #000;"></div>
<div class="m" style="left:151px;top:780.1px;color:#000">EXC</div>
<div style="left:175.5px;top:775px;width:49.5px;height:19.5px;background:#6a73c1;"></div>
<div class="m" style="left:185.25px;top:776px;color:#99ffff">0.000</div>
<div style="left:140px;top:797.3px;width:89px;height:27.2px;background:#73ff6b;"></div>
<div class="b" style="left:140px;top:801px;width:44.5px;height:19px"><div class="m" style="left:-104.25px;top:2.5px;width:300px;text-align:center;color:#000">OFFSET</div></div>
<div class="t" style="left:185px;top:800px;width:43.5px;height:21.5px"><div class="m" style="left:2.4px;top:2.75px;color:#000">0.000</div><i class="ib"></i></div>
<div class="b" style="left:140px;top:826px;width:44.5px;height:17px"><div class="m" style="left:-104.25px;top:0.5px;width:300px;text-align:center;color:#000">LOAD</div></div>
<div class="b" style="left:185px;top:826px;width:44.5px;height:17px"><div class="m" style="left:-104.25px;top:0.5px;width:300px;text-align:center;color:#000">CLEAR</div></div>
<div style="left:230px;top:731px;width:167px;height:114px;border:3px solid #000;"></div>
<div style="left:235px;top:734.5px;width:25px;height:22px;background:#73ff6b;"></div>
<div style="left:367px;top:734.5px;width:25px;height:22px;background:#73ff6b;"></div>
<div style="left:235px;top:755.5px;width:25px;height:22px;background:#73ff6b;"></div>
<div style="left:367px;top:755.5px;width:25px;height:22px;background:#73ff6b;"></div>
<div style="left:235px;top:776.5px;width:25px;height:22px;background:#73ff6b;"></div>
<div class="b" style="left:238px;top:737px;width:20px;height:18px"><div class="m" style="left:-116.5px;top:2px;width:300px;text-align:center;color:#000">1</div></div>
<div class="b" style="left:370px;top:737px;width:20px;height:18px"><div class="m" style="left:-116.5px;top:2px;width:300px;text-align:center;color:#000">6</div></div>
<div style="left:263px;top:737px;width:50px;height:17px;background:#c8c8c8;"></div>
<div style="left:263px;top:740px;width:50px;height:10px;overflow:hidden;"><div class="m" style="left:-141px;top:0.3px;width:400px;text-align:center;color:#000">AC0.01</div></div>
<div style="left:263px;top:737px;width:49px;height:15.5px;border:3px solid #73ff6b;"></div>
<div style="left:315px;top:737px;width:50px;height:17px;background:#c8c8c8;"></div>
<div style="left:315px;top:740px;width:50px;height:10px;overflow:hidden;"><div class="m" style="left:-141px;top:0.3px;width:400px;text-align:center;color:#000">notches</div></div>
<div style="left:315px;top:737px;width:49px;height:15.5px;border:3px solid #73ff6b;"></div>
<div class="b" style="left:238px;top:758px;width:20px;height:18px"><div class="m" style="left:-116.5px;top:2px;width:300px;text-align:center;color:#000">2</div></div>
<div class="b" style="left:370px;top:758px;width:20px;height:18px"><div class="m" style="left:-116.5px;top:2px;width:300px;text-align:center;color:#000">7</div></div>
<div style="left:263px;top:758px;width:50px;height:17px;background:#c8c8c8;"></div>
<div style="left:263px;top:761px;width:50px;height:10px;overflow:hidden;"><div class="m" style="left:-138px;top:0.3px;width:400px;text-align:center;color:#000">omp_tes:</div></div>
<div style="left:263px;top:758px;width:49px;height:15.5px;border:3px solid #73ff6b;"></div>
<div style="left:315px;top:758px;width:50px;height:17px;background:#c8c8c8;"></div>
<div style="left:315px;top:761px;width:50px;height:10px;overflow:hidden;"><div class="m" style="left:-141px;top:0.3px;width:400px;text-align:center;color:#000">LP3</div></div>
<div style="left:315px;top:758px;width:49px;height:15.5px;border:3px solid #73ff6b;"></div>
<div class="b" style="left:238px;top:779px;width:20px;height:18px"><div class="m" style="left:-116.5px;top:2px;width:300px;text-align:center;color:#000">3</div></div>
<div class="b" style="left:370px;top:779px;width:20px;height:18px"><div class="m" style="left:-116.5px;top:2px;width:300px;text-align:center;color:#000">8</div></div>
<div style="left:263px;top:779px;width:50px;height:17px;background:#c8c8c8;"></div>
<div style="left:263px;top:782px;width:50px;height:10px;overflow:hidden;"><div class="m" style="left:-141px;top:0.3px;width:400px;text-align:center;color:#000">lead</div></div>
<div style="left:263px;top:779px;width:49px;height:15.5px;border:3px solid #73ff6b;"></div>
<div style="left:315px;top:781px;width:50px;height:14.5px;overflow:hidden;background:#c8c8c8;"><div class="m" style="left:-141px;top:0.85px;width:400px;text-align:center;color:#000">resG</div></div>
<div class="b" style="left:238px;top:800px;width:20px;height:18px"><div class="m" style="left:-116.5px;top:2px;width:300px;text-align:center;color:#000">4</div></div>
<div class="b" style="left:370px;top:800px;width:20px;height:18px"><div class="m" style="left:-116.5px;top:2px;width:300px;text-align:center;color:#000">9</div></div>
<div style="left:263px;top:802px;width:50px;height:14.5px;overflow:hidden;background:#c8c8c8;"><div class="m" style="left:-141px;top:0.85px;width:400px;text-align:center;color:#000">UGF1</div></div>
<div style="left:315px;top:802px;width:50px;height:14.5px;overflow:hidden;background:#c8c8c8;"><div class="m" style="left:-141px;top:0.85px;width:400px;text-align:center;color:#000">2</div></div>
<div class="b" style="left:238px;top:821px;width:20px;height:18px"><div class="m" style="left:-116.5px;top:2px;width:300px;text-align:center;color:#000">5</div></div>
<div class="b" style="left:370px;top:821px;width:20px;height:18px"><div class="m" style="left:-116.5px;top:2px;width:300px;text-align:center;color:#000">10</div></div>
<div style="left:263px;top:823px;width:50px;height:14.5px;overflow:hidden;background:#c8c8c8;"><div class="m" style="left:-141px;top:0.85px;width:400px;text-align:center;color:#000">lead_old</div></div>
<div style="left:315px;top:823px;width:50px;height:14.5px;overflow:hidden;background:#c8c8c8;"><div class="m" style="left:-141px;top:0.85px;width:400px;text-align:center;color:#000">lant_MN/T</div></div>
<svg style="left:399px;top:762px" width="54" height="54" viewBox="0 0 54 54"><polygon points="0.2,1 0.2,51.8 52,26.4" fill="#000"/></svg>
<div class="t" style="left:400px;top:778px;width:40px;height:22px"><div class="m" style="left:2.4px;top:3px;color:#000">0.000</div><i class="ib"></i></div>
<div class="fb" style="left:452px;top:750px;width:62px;height:24.5px"><svg style="left:10px;top:4px" width="16" height="14" viewBox="0 0 16 14"><path d="M4.5 4.5h8.5v8.5h-8.5z" fill="none" stroke="#fbf34a" stroke-width="1.1"/><path d="M0.6 0.6h8.8v8.8h-8.8z" fill="#216c00" stroke="#fbf34a" stroke-width="1.1"/></svg><div class="m" style="left:24.5px;top:5px;color:#fbf34a">FULL</div></div>
<div style="left:452px;top:777.3px;width:60px;height:21.5px;background:#6a73c1;"></div>
<div class="m" style="left:467px;top:778.3px;color:#99ffff">0.000</div>
<svg style="left:512px;top:778px" width="40" height="50" viewBox="0 0 40 50"><g stroke="#000" stroke-width="2" fill="none"><path d="M0 11.4H36"/><circle cx="18" cy="11.4" r="6.2"/><path d="M18 5v12.8" stroke-width="1.6"/><path d="M17.4 47V18"/></g><path d="M11.8 11.4l-6-3.8v7.6z M36.8 11.4l-6-3.8v7.6z M17.4 17.6l-3.8 6h7.6z" fill="#000"/></svg>
<div style="left:548px;top:779px;width:50px;height:20px;background:#6a73c1;"></div>
<div class="m" style="left:558px;top:780px;color:#99ffff">0.000</div>
<div style="left:508px;top:828px;width:50px;height:19.7px;background:#6a73c1;"></div>
<div class="m" style="left:518px;top:829px;color:#99ffff">0.000</div>
<div class="b" style="left:460px;top:801px;width:25px;height:20px"><div class="m" style="left:-114px;top:3px;width:300px;text-align:center;color:#000">ON</div></div>
<div style="left:489px;top:802px;width:20px;height:15px;background:#73ff6b;border:1px solid #000;"></div>
<div class="t" style="left:400px;top:823px;width:30px;height:20px"><div class="m" style="left:0px;top:2px;color:#000">10.00</div><i class="ib"></i></div>
<div class="m" style="left:433px;top:828.1px;color:#820400">TRAMP</div>
<div class="m" style="left:21.5px;top:198.6px;color:#fff">Set Point</div>
<div class="m" style="left:82.3px;top:197.6px;color:#fff">OPT. ALIGN</div>
<div class="m" style="left:25.5px;top:368.1px;color:#fff">Set Point</div>
<div class="m" style="left:86.3px;top:367.1px;color:#fff">OPT. ALIGN</div>
<div class="m" style="left:21.5px;top:558px;color:#fff">Set Point</div>
<div class="m" style="left:82.3px;top:557px;color:#fff">OPT. ALIGN</div>
<div class="m" style="left:25.5px;top:727.3px;color:#fff">Set Point</div>
<div class="m" style="left:86.3px;top:726.3px;color:#fff">OPT. ALIGN</div>
<svg style="left:160px;top:150px" width="330" height="260" viewBox="160 150 330 260"><ellipse cx="325" cy="278.2" rx="149.7" ry="112.5" fill="none" stroke="#ff2600" stroke-width="9.6"/></svg>
<div style="left:228px;top:1010px;width:420px;height:108px;background:#000;border:1px solid #55564f;"></div>
<div style="left:229px;top:1011px;width:420px;height:24px;background:linear-gradient(#fff 0%,#e9e8e2 35%,#dfded7 55%,#ecebe4 100%);"></div>
<div style="left:229px;top:1035px;width:2px;height:84px;background:#e8e6df;"></div>
<div style="left:232px;top:1015px;width:15px;height:14px;border:1px solid #7b8aa0;border-radius:1px;background:linear-gradient(#3f6fb5 0,#4a7cc4 3px,#e4e4e4 4px,#cfcfcf 100%);"></div>
<div class="q" style="left:438px;top:1063px">K1:ASC-DHARD_P_IN1_DQ</div>
<div class="q" style="left:274.5px;top:1102px">0.04</div>
<div style="left:308px;top:1084px;width:1px;height:34px;background:#bbb;"></div>
<div style="left:340px;top:1084px;width:1px;height:34px;background:#1b1b1b;"></div>
<div style="left:376px;top:1084px;width:1px;height:34px;background:#1b1b1b;"></div>
<div style="left:412px;top:1084px;width:1px;height:34px;background:#1b1b1b;"></div>
<div style="left:448px;top:1084px;width:1px;height:34px;background:#1b1b1b;"></div>
<div style="left:484px;top:1084px;width:1px;height:34px;background:#1b1b1b;"></div>
<div style="left:520px;top:1084px;width:1px;height:34px;background:#1b1b1b;"></div>
<div style="left:556px;top:1084px;width:1px;height:34px;background:#1b1b1b;"></div>
<div style="left:592px;top:1084px;width:1px;height:34px;background:#1b1b1b;"></div>
<div style="left:309px;top:1107px;width:340px;height:1px;background:#1b1b1b;"></div>
<div style="left:5px;top:5px;width:1223px;height:1px;background:#fff;"></div>
<div style="left:1228px;top:5px;width:681px;height:1px;background:#2a2a2a;"></div>
<div style="left:621px;top:6px;width:1288px;height:1120px;background:#e8e8e8;border:2px solid #1c1c1c;border-top:0;"></div>
<div style="left:621px;top:6px;width:1288px;height:23px;background:linear-gradient(#6a6a6a 0,#585858 1px,#4c4c4c 3px,#424242 11px,#232323 11.5px,#1e1e1e 21px,#000 22px,#000 23px);"></div>
<div style="left:626px;top:9.5px;width:14px;height:14px;border:1px solid #9aa4b4;border-radius:1px;background:linear-gradient(#3f6fb5 0,#4a7cc4 3px,#e9e9e9 4px,#cfcfcf 100%);"></div>
<div style="left:1165px;top:6px;width:200px;height:22px;font:bold 13px/22px 'DejaVu Sans',sans-serif;color:#fff;text-align:center;text-shadow:0 1px 1px #000">Foton</div>
<div style="left:1861px;top:17.6px;width:6.5px;height:2px;background:#fff;"></div>
<div style="left:1878px;top:14px;width:6.5px;height:6px;border:1px solid #fff;border-top:2px solid #fff;"></div>
<svg style="left:1894.5px;top:13.8px" width="7" height="7" viewBox="0 0 7 7"><path d="M0.8 0.8l5.4 5.4M6.2 0.8l-5.4 5.4" stroke="#fff" stroke-width="1.9"/></svg>
<div style="left:1909px;top:5px;width:2px;height:1113px;background:#f6f5f1;"></div>
<div style="left:1909px;top:312px;width:2px;height:34px;background:#bdeeb0;"></div>
<div style="left:1909px;top:432px;width:2px;height:18px;background:#b0b0b0;"></div>
<div style="left:1909px;top:924px;width:2px;height:108px;background:#339900;"></div>
<div style="left:1909px;top:1042px;width:2px;height:76px;background:#000;"></div>
<div style="left:1909px;top:1066px;width:2px;height:1px;background:#fff;"></div>
<div style="left:1909px;top:1074px;width:2px;height:1px;background:#fff;"></div>
<div class="f" style="left:628px;top:33px;"><span class="u">F</span>ile</div>
<div class="f" style="left:660.2px;top:33px;"><span class="u">P</span>lot</div>
<div class="f" style="left:693.2px;top:33px;"><span class="u">W</span>indow</div>
<div class="f" style="left:1876.3px;top:33px;"><span class="u">H</span>elp</div>
<div style="left:623px;top:51px;width:1284px;height:1px;background:#888;"></div>
<div style="left:623px;top:52px;width:1284px;height:1px;background:#fff;"></div>
<div style="left:623px;top:53px;width:1284px;height:1px;background:#999;"></div>
<div class="tab" style="left:626px;top:56px;width:56px;height:17px;"></div>
<div class="f" style="left:635.3px;top:56.8px;">Design</div>
<div style="left:626px;top:72px;width:1281px;height:1px;background:#fff;"></div>
<div class="tab" style="left:682px;top:54px;width:68px;height:19px;background:#e8e8e8;"></div>
<div class="f" style="left:690.3px;top:54.3px;">Graphics</div>
<div style="left:1905px;top:73px;width:1px;height:993px;background:#888;"></div>
<div style="left:1906px;top:73px;width:1px;height:993px;background:#fff;"></div>
<div style="left:623px;top:1065px;width:1283px;height:1px;background:#888;"></div>
<div style="left:623px;top:1066px;width:1284px;height:1px;background:#fff;"></div>
<div style="left:623px;top:1103px;width:1284px;height:1px;background:#888;"></div>
<div style="left:623px;top:1104px;width:1284px;height:1px;background:#fff;"></div>
<div class="rb" style="left:631px;top:80px;width:16px;height:15px"><svg style="left:4px;top:3px" width="6" height="8" viewBox="0 0 6 8"><path d="M5 0v8L0.5 4z" fill="#000"/></svg></div>
<div class="tab" style="left:633px;top:107px;width:90px;height:19px;"></div>
<div class="f" style="left:639px;top:107.8px;">Traces</div>
<div class="tab" style="left:724px;top:107px;width:89px;height:19px;"></div>
<div class="f" style="left:729.8px;top:107.8px;">Range</div>
<div class="tab" style="left:814px;top:107px;width:85px;height:19px;"></div>
<div class="f" style="left:820px;top:107.8px;">Units</div>
<div class="tab" style="left:900px;top:107px;width:89px;height:19px;"></div>
<div class="f" style="left:905.7px;top:107.8px;">Cursor</div>
<div class="tab" style="left:989px;top:107px;width:89px;height:19px;"></div>
<div class="f" style="left:995.8px;top:107.8px;">Config</div>
<div class="tab" style="left:633px;top:126px;width:87px;height:18px;"></div>
<div class="f" style="left:639px;top:126.7px;">Style</div>
<div class="tab" style="left:720px;top:126px;width:87px;height:18px;"></div>
<div class="f" style="left:726.2px;top:126.7px;">X-axis</div>
<div class="tab" style="left:808px;top:126px;width:86px;height:18px;"></div>
<div class="f" style="left:814.2px;top:126.7px;">Y-axis</div>
<div class="tab" style="left:990px;top:126px;width:88px;height:18px;"></div>
<div class="f" style="left:995.8px;top:126.7px;">Param</div>
<div style="left:631px;top:143px;width:448px;height:361px;background:#e8e8e8;border:1px solid;border-color:#fff #888 #888 #fff;"></div>
<div class="tab" style="left:894px;top:124px;width:96px;height:21px;"></div>
<div class="f" style="left:899px;top:125.3px;">Legend</div>
<div class="ne" style="left:636px;top:148px;width:12px;height:12px"><svg style="left:1px;top:1px" width="9" height="9" viewBox="0 0 9 9"><path d="M1.2 3.4L3.4 6 7.8 1.2" stroke="#000" stroke-width="1.7" fill="none"/></svg></div>
<div class="f" style="left:655.2px;top:145.5px;">Show</div>
<div class="grp" style="left:635px;top:169px;width:439px;height:74px;"></div>
<div style="left:643px;top:162px;width:63px;height:14px;background:#e8e8e8;"></div>
<div class="f" style="left:646.4px;top:160.6px;">Placement</div>
<div class="rad" style="left:651px;top:180.5px"></div>
<div class="f" style="left:671.2px;top:176.7px;">Top left</div>
<div class="rad" style="left:743px;top:180.5px"></div>
<div class="f" style="left:763.2px;top:176.7px;">Top Right</div>
<div class="rad" style="left:651px;top:199px"><div style="left:3px;top:3px;width:4px;height:4px;border-radius:50%;background:#000"></div></div>
<div class="f" style="left:671.2px;top:195.8px;">Bottom left</div>
<div class="rad" style="left:743px;top:199px"></div>
<div class="f" style="left:763.2px;top:195.8px;">Bottom Right</div>
<div class="f" style="left:658.3px;top:215.8px;">X:</div>
<div class="ne2" style="left:674px;top:216px;width:43px;height:20px;"></div>
<div class="f" style="left:674px;top:217.2px;width:37px;text-align:right">0.00</div>
<div class="rb" style="left:717px;top:216px;width:13px;height:10px"><svg style="left:2px;top:2px" width="7" height="5" viewBox="0 0 7 5"><path d="M0 4.5h7L3.5 0z" fill="#000"/></svg></div>
<div class="rb" style="left:717px;top:226px;width:13px;height:10px"><svg style="left:2px;top:2px" width="7" height="5" viewBox="0 0 7 5"><path d="M0 0.5h7L3.5 5z" fill="#000"/></svg></div>
<div class="f" style="left:757.5px;top:215.8px;">Y:</div>
<div class="ne2" style="left:773px;top:216px;width:43px;height:20px;"></div>
<div class="f" style="left:773px;top:217.2px;width:37px;text-align:right">0.00</div>
<div class="rb" style="left:816px;top:216px;width:13px;height:10px"><svg style="left:2px;top:2px" width="7" height="5" viewBox="0 0 7 5"><path d="M0 4.5h7L3.5 0z" fill="#000"/></svg></div>
<div class="rb" style="left:816px;top:226px;width:13px;height:10px"><svg style="left:2px;top:2px" width="7" height="5" viewBox="0 0 7 5"><path d="M0 0.5h7L3.5 5z" fill="#000"/></svg></div>
<div class="f" style="left:846px;top:215.8px;">Size:</div>
<div class="ne2" style="left:878px;top:216px;width:35px;height:20px;"></div>
<div class="f" style="left:878px;top:217.2px;width:29px;text-align:right">1.0</div>
<div class="rb" style="left:913px;top:216px;width:13px;height:10px"><svg style="left:2px;top:2px" width="7" height="5" viewBox="0 0 7 5"><path d="M0 4.5h7L3.5 0z" fill="#000"/></svg></div>
<div class="rb" style="left:913px;top:226px;width:13px;height:10px"><svg style="left:2px;top:2px" width="7" height="5" viewBox="0 0 7 5"><path d="M0 0.5h7L3.5 5z" fill="#000"/></svg></div>
<div class="grp" style="left:635px;top:257px;width:439px;height:35px;"></div>
<div style="left:643px;top:250px;width:70px;height:14px;background:#e8e8e8;"></div>
<div class="f" style="left:646px;top:248.5px;">Symbol style</div>
<div class="rad" style="left:649.5px;top:265.8px"><div style="left:3px;top:3px;width:4px;height:4px;border-radius:50%;background:#000"></div></div>
<div class="f" style="left:669.2px;top:263px;">Same as trace</div>
<div class="rad" style="left:759px;top:265.8px"></div>
<div class="f" style="left:778px;top:263px;">None</div>
<div class="grp" style="left:635px;top:300px;width:439px;height:87px;"></div>
<div style="left:643px;top:293px;width:28px;height:14px;background:#e8e8e8;"></div>
<div class="f" style="left:646px;top:292px;">Text</div>
<div class="rad" style="left:649.5px;top:308.6px"><div style="left:3px;top:3px;width:4px;height:4px;border-radius:50%;background:#000"></div></div>
<div class="f" style="left:669.2px;top:305.5px;">Auto</div>
<div class="rad" style="left:779px;top:308.6px"></div>
<div class="f" style="left:799.2px;top:305.5px;">User</div>
<div style="left:649px;top:348px;width:308px;height:1px;background:#fff;"></div>
<div style="left:649px;top:349px;width:308px;height:1px;background:#888;"></div>
<div class="tab" style="left:689px;top:330px;width:37px;height:18px;"></div>
<div class="f" style="left:695.5px;top:330px;">1</div>
<div class="tab" style="left:727px;top:330px;width:37px;height:18px;"></div>
<div class="f" style="left:733.5px;top:330px;">2</div>
<div class="tab" style="left:765px;top:330px;width:37px;height:18px;"></div>
<div class="f" style="left:771.5px;top:330px;">3</div>
<div class="tab" style="left:803px;top:330px;width:37px;height:18px;"></div>
<div class="f" style="left:809.5px;top:330px;">4</div>
<div class="tab" style="left:841px;top:330px;width:37px;height:18px;"></div>
<div class="f" style="left:847.5px;top:330px;">5</div>
<div class="tab" style="left:879px;top:330px;width:37px;height:18px;"></div>
<div class="f" style="left:885.5px;top:330px;">6</div>
<div class="tab" style="left:917px;top:330px;width:37px;height:18px;"></div>
<div class="f" style="left:923.5px;top:330px;">7</div>
<div class="tab" style="left:649px;top:328px;width:40px;height:21px;"></div>
<div class="f" style="left:654.5px;top:328px;">0</div>
<div style="left:649px;top:355px;width:400px;height:25px;background:#e8e8e8;border:1px solid;border-color:#888 #fff #fff #888;"></div>
<div class="rb" style="left:631px;top:559px;width:16px;height:15px"><svg style="left:4px;top:3px" width="6" height="8" viewBox="0 0 6 8"><path d="M5 0v8L0.5 4z" fill="#000"/></svg></div>
<div class="tab" style="left:633px;top:586px;width:90px;height:19px;"></div>
<div class="f" style="left:639px;top:586.8px;">Traces</div>
<div class="tab" style="left:724px;top:586px;width:89px;height:19px;"></div>
<div class="f" style="left:729.8px;top:586.8px;">Range</div>
<div class="tab" style="left:814px;top:586px;width:85px;height:19px;"></div>
<div class="f" style="left:820px;top:586.8px;">Units</div>
<div class="tab" style="left:900px;top:586px;width:89px;height:19px;"></div>
<div class="f" style="left:905.7px;top:586.8px;">Cursor</div>
<div class="tab" style="left:989px;top:586px;width:89px;height:19px;"></div>
<div class="f" style="left:995.8px;top:586.8px;">Config</div>
<div class="tab" style="left:633px;top:605px;width:87px;height:18px;"></div>
<div class="f" style="left:639px;top:605.7px;">Style</div>
<div class="tab" style="left:720px;top:605px;width:87px;height:18px;"></div>
<div class="f" style="left:726.2px;top:605.7px;">X-axis</div>
<div class="tab" style="left:808px;top:605px;width:86px;height:18px;"></div>
<div class="f" style="left:814.2px;top:605.7px;">Y-axis</div>
<div class="tab" style="left:990px;top:605px;width:88px;height:18px;"></div>
<div class="f" style="left:995.8px;top:605.7px;">Param</div>
<div style="left:631px;top:622px;width:448px;height:361px;background:#e8e8e8;border:1px solid;border-color:#fff #888 #888 #fff;"></div>
<div class="tab" style="left:894px;top:603px;width:96px;height:21px;"></div>
<div class="f" style="left:899px;top:604.3px;">Legend</div>
<div class="ne" style="left:636px;top:627px;width:12px;height:12px"><svg style="left:1px;top:1px" width="9" height="9" viewBox="0 0 9 9"><path d="M1.2 3.4L3.4 6 7.8 1.2" stroke="#000" stroke-width="1.7" fill="none"/></svg></div>
<div class="f" style="left:655.2px;top:624.5px;">Show</div>
<div class="grp" style="left:635px;top:648px;width:439px;height:74px;"></div>
<div style="left:643px;top:641px;width:63px;height:14px;background:#e8e8e8;"></div>
<div class="f" style="left:646.4px;top:639.6px;">Placement</div>
<div class="rad" style="left:651px;top:659.5px"></div>
<div class="f" style="left:671.2px;top:655.7px;">Top left</div>
<div class="rad" style="left:743px;top:659.5px"></div>
<div class="f" style="left:763.2px;top:655.7px;">Top Right</div>
<div class="rad" style="left:651px;top:678px"><div style="left:3px;top:3px;width:4px;height:4px;border-radius:50%;background:#000"></div></div>
<div class="f" style="left:671.2px;top:674.8px;">Bottom left</div>
<div class="rad" style="left:743px;top:678px"></div>
<div class="f" style="left:763.2px;top:674.8px;">Bottom Right</div>
<div class="f" style="left:658.3px;top:694.8px;">X:</div>
<div class="ne2" style="left:674px;top:695px;width:43px;height:20px;"></div>
<div class="f" style="left:674px;top:696.2px;width:37px;text-align:right">0.00</div>
<div class="rb" style="left:717px;top:695px;width:13px;height:10px"><svg style="left:2px;top:2px" width="7" height="5" viewBox="0 0 7 5"><path d="M0 4.5h7L3.5 0z" fill="#000"/></svg></div>
<div class="rb" style="left:717px;top:705px;width:13px;height:10px"><svg style="left:2px;top:2px" width="7" height="5" viewBox="0 0 7 5"><path d="M0 0.5h7L3.5 5z" fill="#000"/></svg></div>
<div class="f" style="left:757.5px;top:694.8px;">Y:</div>
<div class="ne2" style="left:773px;top:695px;width:43px;height:20px;"></div>
<div class="f" style="left:773px;top:696.2px;width:37px;text-align:right">0.00</div>
<div class="rb" style="left:816px;top:695px;width:13px;height:10px"><svg style="left:2px;top:2px" width="7" height="5" viewBox="0 0 7 5"><path d="M0 4.5h7L3.5 0z" fill="#000"/></svg></div>
<div class="rb" style="left:816px;top:705px;width:13px;height:10px"><svg style="left:2px;top:2px" width="7" height="5" viewBox="0 0 7 5"><path d="M0 0.5h7L3.5 5z" fill="#000"/></svg></div>
<div class="f" style="left:846px;top:694.8px;">Size:</div>
<div class="ne2" style="left:878px;top:695px;width:35px;height:20px;"></div>
<div class="f" style="left:878px;top:696.2px;width:29px;text-align:right">1.0</div>
<div class="rb" style="left:913px;top:695px;width:13px;height:10px"><svg style="left:2px;top:2px" width="7" height="5" viewBox="0 0 7 5"><path d="M0 4.5h7L3.5 0z" fill="#000"/></svg></div>
<div class="rb" style="left:913px;top:705px;width:13px;height:10px"><svg style="left:2px;top:2px" width="7" height="5" viewBox="0 0 7 5"><path d="M0 0.5h7L3.5 5z" fill="#000"/></svg></div>
<div class="grp" style="left:635px;top:736px;width:439px;height:35px;"></div>
<div style="left:643px;top:729px;width:70px;height:14px;background:#e8e8e8;"></div>
<div class="f" style="left:646px;top:727.5px;">Symbol style</div>
<div class="rad" style="left:649.5px;top:744.8px"><div style="left:3px;top:3px;width:4px;height:4px;border-radius:50%;background:#000"></div></div>
<div class="f" style="left:669.2px;top:742px;">Same as trace</div>
<div class="rad" style="left:759px;top:744.8px"></div>
<div class="f" style="left:778px;top:742px;">None</div>
<div class="grp" style="left:635px;top:779px;width:439px;height:87px;"></div>
<div style="left:643px;top:772px;width:28px;height:14px;background:#e8e8e8;"></div>
<div class="f" style="left:646px;top:771px;">Text</div>
<div class="rad" style="left:649.5px;top:787.6px"><div style="left:3px;top:3px;width:4px;height:4px;border-radius:50%;background:#000"></div></div>
<div class="f" style="left:669.2px;top:784.5px;">Auto</div>
<div class="rad" style="left:779px;top:787.6px"></div>
<div class="f" style="left:799.2px;top:784.5px;">User</div>
<div style="left:649px;top:827px;width:308px;height:1px;background:#fff;"></div>
<div style="left:649px;top:828px;width:308px;height:1px;background:#888;"></div>
<div class="tab" style="left:689px;top:809px;width:37px;height:18px;"></div>
<div class="f" style="left:695.5px;top:809px;">1</div>
<div class="tab" style="left:727px;top:809px;width:37px;height:18px;"></div>
<div class="f" style="left:733.5px;top:809px;">2</div>
<div class="tab" style="left:765px;top:809px;width:37px;height:18px;"></div>
<div class="f" style="left:771.5px;top:809px;">3</div>
<div class="tab" style="left:803px;top:809px;width:37px;height:18px;"></div>
<div class="f" style="left:809.5px;top:809px;">4</div>
<div class="tab" style="left:841px;top:809px;width:37px;height:18px;"></div>
<div class="f" style="left:847.5px;top:809px;">5</div>
<div class="tab" style="left:879px;top:809px;width:37px;height:18px;"></div>
<div class="f" style="left:885.5px;top:809px;">6</div>
<div class="tab" style="left:917px;top:809px;width:37px;height:18px;"></div>
<div class="f" style="left:923.5px;top:809px;">7</div>
<div class="tab" style="left:649px;top:807px;width:40px;height:21px;"></div>
<div class="f" style="left:654.5px;top:807px;">0</div>
<div style="left:649px;top:834px;width:400px;height:25px;background:#e8e8e8;border:1px solid;border-color:#888 #fff #fff #888;"></div>
<div class="rb" style="left:629.4px;top:1036px;width:126.3px;height:25px"><div class="f" style="left:0;top:3px;width:124px;text-align:center">Reset</div></div>
<div class="rb" style="left:756.4px;top:1036px;width:126.3px;height:25px"><div class="f" style="left:0;top:3px;width:124px;text-align:center">Zoom</div></div>
<div class="rb" style="left:883.4px;top:1036px;width:126.3px;height:25px"><div class="f" style="left:0;top:3px;width:124px;text-align:center">Active</div></div>
<div class="rb" style="left:1010.4px;top:1036px;width:126.3px;height:25px"><div class="f" style="left:0;top:3px;width:124px;text-align:center">New</div></div>
<div class="rb" style="left:1137.4px;top:1036px;width:126.3px;height:25px"><div class="f" style="left:0;top:3px;width:124px;text-align:center">Options...</div></div>
<div class="rb" style="left:1264.4px;top:1036px;width:126.3px;height:25px"><div class="f" style="left:0;top:3px;width:124px;text-align:center">Import...</div></div>
<div class="rb" style="left:1391.4px;top:1036px;width:126.3px;height:25px"><div class="f" style="left:0;top:3px;width:124px;text-align:center">Export...</div></div>
<div class="rb" style="left:1518.4px;top:1036px;width:126.3px;height:25px"><div class="f" style="left:0;top:3px;width:124px;text-align:center">Reference...</div></div>
<div class="rb" style="left:1645.4px;top:1036px;width:126.3px;height:25px"><div class="f" style="left:0;top:3px;width:124px;text-align:center">Calibration...</div></div>
<div class="rb" style="left:1772.4px;top:1036px;width:126.3px;height:25px"><div class="f" style="left:0;top:3px;width:124px;text-align:center">Print...</div></div>
<div class="rb" style="left:648.4px;top:1077px;width:163.6px;height:20px"><div class="fbld" style="left:53.2px;top:-2px;color:#000;">Bode Plot</div></div>
<div class="rb" style="left:862.3px;top:1077px;width:163.6px;height:20px"><div class="fbld" style="left:37.9px;top:-2px;color:#000;">Step Response</div></div>
<div class="rb" style="left:1076.2px;top:1077px;width:163.6px;height:20px"><div class="fbld" style="left:40.9px;top:-2px;color:#000;">s-Plane Roots</div></div>
<div class="rb" style="left:1290.1px;top:1077px;width:163.6px;height:20px"><div class="fbld" style="left:67.5px;top:-2px;color:#888;text-shadow:1px 1px 0 #fff;">Save</div></div>
<div class="rb" style="left:1504px;top:1077px;width:163.6px;height:20px"><div class="fbld" style="left:32.6px;top:-2px;color:#888;text-shadow:1px 1px 0 #fff;">Load Coefficients</div></div>
<div class="rb" style="left:1717.9px;top:1077px;width:163.6px;height:20px"><div class="fbld" style="left:70.6px;top:-2px;color:#000;">Exit</div></div>
<svg style="left:1893px;top:1104px" width="14" height="14" viewBox="0 0 14 14"><path d="M0 14L14 0M4 14L14 4M8 14L14 8" stroke="#888" stroke-width="1"/><path d="M1 14L14 1M5 14L14 5M9 14L14 9" stroke="#fff" stroke-width="1"/></svg>
<svg style="left:1081px;top:80px" width="818" height="472" viewBox="1081 80 818 472" font-family="Liberation Sans, sans-serif" font-weight="bold"><rect x="1081" y="80" width="818" height="472" fill="#fff"/><path d="M1081.5 552V80.5H1900" stroke="#8a8a8a" fill="none"/><rect x="1088" y="86" width="200" height="22" fill="#000"/><rect x="1090.5" y="83.5" width="196.5" height="23" fill="#f4f4f4" stroke="#000"/><text x="1188" y="102" font-size="19.2" text-anchor="middle">Transfer function</text><path d="M1169.5 128.5V466.5 M1306.5 128.5V466.5 M1442.5 128.5V466.5 M1578.5 128.5V466.5 M1715.5 128.5V466.5 M1851.5 128.5V466.5 M1163.5 136.5H1857.6 M1163.5 194.5H1857.6 M1163.5 252.5H1857.6 M1163.5 310.5H1857.6 M1163.5 369.5H1857.6 M1163.5 427.5H1857.6" stroke="#000" stroke-width="1" stroke-dasharray="1 2" fill="none" shape-rendering="crispEdges"/><path d="M1169.6 210.1 L1170.6 210.1 L1171.6 210.1 L1172.6 210.1 L1173.6 210.1 L1174.6 210.1 L1175.6 210.1 L1176.6 210.1 L1177.6 210.1 L1178.6 210.1 L1179.6 210.1 L1180.6 210.1 L1181.6 210.1 L1182.6 210.1 L1183.6 210.1 L1184.6 210.1 L1185.6 210.1 L1186.6 210.1 L1187.6 210.1 L1188.6 210.1 L1189.6 210.1 L1190.6 210.1 L1191.6 210.1 L1192.6 210.1 L1193.6 210.1 L1194.6 210.1 L1195.6 210.1 L1196.6 210.1 L1197.6 210.1 L1198.6 210.1 L1199.6 210.1 L1200.6 210.1 L1201.6 210.1 L1202.6 210.1 L1203.6 210.1 L1204.7 210.1 L1205.7 210.1 L1206.7 210.1 L1207.7 210.1 L1208.7 210.1 L1209.7 210.1 L1210.7 210.1 L1211.7 210.1 L1212.7 210.1 L1213.7 210.1 L1214.7 210.1 L1215.7 210.1 L1216.7 210.1 L1217.7 210.1 L1218.7 210.1 L1219.7 210.1 L1220.7 210.1 L1221.7 210.1 L1222.7 210.1 L1223.7 210.1 L1224.7 210.1 L1225.7 210.1 L1226.7 210.1 L1227.7 210.1 L1228.7 210.1 L1229.7 210.1 L1230.7 210.1 L1231.7 210.1 L1232.7 210.1 L1233.7 210.1 L1234.7 210.1 L1235.7 210.1 L1236.7 210.1 L1237.7 210.1 L1238.7 210.1 L1239.7 210.1 L1240.7 210.1 L1241.7 210.1 L1242.7 210.1 L1243.7 210.1 L1244.7 210.1 L1245.7 210.1 L1246.7 210.1 L1247.7 210.1 L1248.7 210.1 L1249.7 210.1 L1250.7 210.1 L1251.7 210.1 L1252.7 210.1 L1253.7 210.1 L1254.7 210.1 L1255.7 210.1 L1256.7 210.1 L1257.7 210.1 L1258.7 210.1 L1259.7 210.1 L1260.7 210.1 L1261.7 210.1 L1262.7 210.1 L1263.7 210.1 L1264.7 210.1 L1265.7 210.1 L1266.7 210.1 L1267.7 210.1 L1268.7 210.1 L1269.7 210.1 L1270.7 210.1 L1271.7 210.1 L1272.8 210.1 L1273.8 210.1 L1274.8 210.1 L1275.8 210.1 L1276.8 210.1 L1277.8 210.0 L1278.8 210.0 L1279.8 210.0 L1280.8 210.0 L1281.8 210.0 L1282.8 210.0 L1283.8 210.0 L1284.8 210.0 L1285.8 210.0 L1286.8 210.0 L1287.8 210.0 L1288.8 210.0 L1289.8 210.0 L1290.8 210.0 L1291.8 210.0 L1292.8 210.0 L1293.8 210.0 L1294.8 210.0 L1295.8 210.0 L1296.8 210.0 L1297.8 210.0 L1298.8 210.0 L1299.8 210.0 L1300.8 210.0 L1301.8 210.0 L1302.8 210.0 L1303.8 210.0 L1304.8 210.0 L1305.8 210.0 L1306.8 210.0 L1307.8 210.0 L1308.8 210.0 L1309.8 210.0 L1310.8 210.0 L1311.8 210.0 L1312.8 210.0 L1313.8 210.0 L1314.8 210.0 L1315.8 210.0 L1316.8 210.0 L1317.8 210.0 L1318.8 210.0 L1319.8 210.0 L1320.8 210.0 L1321.8 210.0 L1322.8 210.0 L1323.8 210.0 L1324.8 210.0 L1325.8 210.0 L1326.8 210.0 L1327.8 210.0 L1328.8 210.0 L1329.8 210.0 L1330.8 210.0 L1331.8 210.0 L1332.8 210.0 L1333.8 209.9 L1334.8 209.9 L1335.8 209.9 L1336.8 209.9 L1337.8 209.9 L1338.8 209.9 L1339.8 209.9 L1340.8 209.9 L1341.9 209.9 L1342.9 209.9 L1343.9 209.9 L1344.9 209.9 L1345.9 209.9 L1346.9 209.9 L1347.9 209.9 L1348.9 209.9 L1349.9 209.9 L1350.9 209.9 L1351.9 209.9 L1352.9 209.9 L1353.9 209.9 L1354.9 209.9 L1355.9 209.9 L1356.9 209.9 L1357.9 209.9 L1358.9 209.9 L1359.9 209.9 L1360.9 209.9 L1361.9 209.9 L1362.9 209.9 L1363.9 209.9 L1364.9 209.9 L1365.9 209.9 L1366.9 209.9 L1367.9 209.8 L1368.9 209.8 L1369.9 209.8 L1370.9 209.8 L1371.9 209.8 L1372.9 209.8 L1373.9 209.8 L1374.9 209.8 L1375.9 209.8 L1376.9 209.8 L1377.9 209.8 L1378.9 209.8 L1379.9 209.8 L1380.9 209.8 L1381.1 209.8 L1381.9 209.8 L1382.9 209.8 L1383.9 209.7 L1384.9 209.7 L1385.9 209.7 L1386.9 209.6 L1387.9 209.5 L1388.9 209.5 L1389.9 209.4 L1390.9 209.3 L1391.9 209.2 L1392.9 209.1 L1393.9 209.0 L1394.3 209.0 L1394.9 208.9 L1395.9 208.8 L1396.9 208.7 L1397.9 208.6 L1398.9 208.5 L1399.9 208.3 L1400.9 208.1 L1401.9 207.9 L1402.9 207.7 L1403.9 207.5 L1404.9 207.3 L1405.3 207.2 L1405.9 207.0 L1406.9 206.7 L1407.9 206.3 L1408.9 205.8 L1410.0 205.3 L1411.0 204.7 L1411.9 204.1 L1412.0 204.1 L1413.0 203.4 L1414.0 202.6 L1415.0 201.8 L1416.0 200.8 L1417.0 199.6 L1417.4 199.1 L1418.0 198.3 L1419.0 196.6 L1420.0 194.6 L1421.0 192.4 L1421.8 190.3 L1422.0 189.9 L1423.0 187.0 L1424.0 183.6 L1425.0 179.8 L1425.1 179.3 L1426.0 175.3 L1427.0 170.0 L1427.3 168.3 L1428.0 163.7 L1429.0 158.6 L1429.0 158.6 L1429.8 158.4 L1430.0 158.7 L1430.6 162.0 L1431.0 163.8 L1432.0 168.9 L1432.7 172.7 L1433.0 174.3 L1434.0 180.7 L1434.9 185.9 L1435.0 186.3 L1436.0 190.5 L1437.0 194.1 L1437.0 194.1 L1438.0 197.0 L1438.6 198.5 L1439.0 199.3 L1440.0 201.1 L1441.0 202.7 L1442.0 204.2 L1442.4 204.8 L1443.0 205.7 L1444.0 207.1 L1445.0 208.4 L1446.0 209.5 L1446.0 209.5 L1447.0 210.4 L1448.0 211.2 L1449.0 211.9 L1450.0 212.6 L1451.0 213.3 L1451.4 213.6 L1452.0 214.1 L1453.0 215.0 L1454.0 215.8 L1455.0 216.6 L1455.2 216.7 L1456.0 217.2 L1457.0 217.8 L1458.0 218.3 L1459.0 218.9 L1460.0 219.3 L1461.0 219.8 L1462.0 220.3 L1462.4 220.5 L1463.0 220.8 L1464.0 221.3 L1465.0 221.8 L1466.0 222.3 L1467.0 222.7 L1468.0 223.2 L1469.0 223.7 L1470.0 224.1 L1470.2 224.2 L1471.0 224.6 L1472.0 225.0 L1473.0 225.4 L1474.0 225.8 L1475.0 226.3 L1475.6 226.5 L1476.0 226.7 L1477.0 227.1 L1478.0 227.6 L1479.1 228.0 L1480.1 228.5 L1481.1 228.9 L1482.1 229.4 L1483.1 229.9 L1484.1 230.3 L1485.1 230.7 L1486.1 231.2 L1487.1 231.6 L1488.1 232.0 L1489.0 232.4 L1489.1 232.4 L1490.1 232.8 L1491.1 233.2 L1492.1 233.5 L1493.1 233.9 L1494.1 234.3 L1495.1 234.6 L1496.1 235.0 L1497.1 235.3 L1498.1 235.7 L1499.1 236.0 L1500.0 236.4 L1500.1 236.4 L1501.1 236.8 L1502.1 237.2 L1503.1 237.7 L1504.1 238.1 L1505.1 238.5 L1506.1 239.0 L1507.1 239.4 L1508.1 239.9 L1508.8 240.2 L1509.1 240.3 L1510.1 240.8 L1511.1 241.3 L1512.1 241.7 L1513.1 242.2 L1514.1 242.7 L1515.1 243.1 L1516.1 243.6 L1517.1 244.1 L1518.1 244.6 L1519.1 245.1 L1520.1 245.6 L1521.1 246.2 L1522.1 246.7 L1523.1 247.3 L1524.1 247.8 L1525.1 248.4 L1526.1 249.1 L1527.1 249.7 L1528.1 250.4 L1528.9 250.9 L1529.1 251.1 L1530.1 251.8 L1531.1 252.6 L1532.1 253.4 L1533.1 254.3 L1534.1 255.2 L1535.1 256.2 L1536.1 257.3 L1537.1 258.4 L1537.7 259.0 L1538.1 259.5 L1539.1 260.7 L1540.1 262.1 L1541.1 263.5 L1542.1 265.1 L1543.1 266.8 L1544.0 268.4 L1544.1 268.7 L1545.1 271.0 L1546.1 273.6 L1547.2 276.6 L1548.2 279.6 L1548.4 280.4 L1549.2 283.2 L1550.2 287.2 L1550.9 289.2 L1551.2 289.7 L1552.2 291.1 L1552.7 291.4 L1553.2 291.3 L1554.2 290.5 L1555.2 289.3 L1555.3 289.2 L1556.2 288.2 L1557.2 286.8 L1558.2 285.3 L1559.2 284.0 L1560.2 283.0 L1560.3 282.9 L1561.2 282.3 L1562.2 281.7 L1563.2 281.4 L1563.4 281.4 L1564.2 281.5 L1565.2 281.7 L1566.2 282.1 L1567.2 282.6 L1567.8 282.9 L1568.2 283.1 L1569.2 283.7 L1570.2 284.4 L1571.2 285.3 L1572.2 286.2 L1573.2 287.1 L1574.1 287.9 L1574.2 288.0 L1575.2 288.8 L1576.2 289.5 L1577.2 290.6 L1577.9 291.7 L1578.2 292.4 L1579.2 297.2 L1579.7 300.5 L1580.2 304.8 L1581.2 317.4 L1581.6 317.4 L1582.3 300.5 L1582.6 298.0 L1583.5 294.2 L1583.7 293.6 L1584.7 290.0 L1585.7 287.3 L1586.0 286.7 L1586.7 285.4 L1587.8 283.9 L1588.8 282.6 L1589.8 281.5 L1590.4 281.0 L1590.9 280.6 L1591.9 279.7 L1592.9 278.9 L1593.9 278.2 L1595.0 277.5 L1596.0 276.9 L1596.7 276.6 L1597.0 276.5 L1598.1 276.0 L1599.1 275.5 L1600.1 275.1 L1601.1 274.8 L1602.2 274.6 L1603.0 274.5 L1603.2 274.5 L1604.2 274.8 L1605.3 275.4 L1606.1 276.0 L1606.3 276.2 L1607.3 278.1 L1608.0 280.4 L1608.3 282.3 L1609.3 292.9 L1609.4 294.1 L1610.4 330.6 L1610.7 330.6 L1611.5 292.9 L1611.7 288.7 L1612.4 280.4 L1612.7 279.0 L1613.7 276.3 L1614.3 275.4 L1614.7 274.8 L1615.7 273.6 L1616.7 272.8 L1617.4 272.6 L1617.8 272.6 L1618.8 272.5 L1619.8 272.4 L1620.8 272.4 L1621.8 272.3 L1622.8 272.3 L1623.8 272.3 L1624.3 272.3 L1624.8 272.3 L1625.8 272.5 L1626.8 272.8 L1627.8 273.3 L1628.8 273.8 L1629.8 274.3 L1630.9 274.9 L1631.9 275.4 L1631.9 275.4 L1632.9 275.9 L1633.9 276.4 L1634.9 276.9 L1635.9 277.5 L1636.9 278.1 L1637.9 278.7 L1638.9 279.3 L1639.9 279.9 L1640.7 280.4 L1640.9 280.5 L1641.9 281.2 L1642.9 281.9 L1644.0 282.6 L1645.0 283.4 L1646.0 284.1 L1647.0 284.9 L1648.0 285.7 L1649.0 286.5 L1650.0 287.3 L1650.7 287.9 L1651.0 288.2 L1652.0 289.0 L1653.0 289.9 L1654.0 290.7 L1655.0 291.6 L1656.0 292.5 L1657.1 293.5 L1658.1 294.4 L1659.1 295.3 L1660.1 296.3 L1661.1 297.2 L1662.1 298.1 L1663.1 299.0 L1663.3 299.2 L1664.1 299.9 L1665.1 300.8 L1666.1 301.7 L1667.1 302.7 L1668.1 303.6 L1669.1 304.5 L1670.2 305.4 L1671.2 306.3 L1672.2 307.2 L1673.2 308.1 L1674.2 309.0 L1675.2 310.0 L1675.8 310.5 L1676.2 310.9 L1677.2 311.8 L1678.2 312.7 L1679.2 313.5 L1680.2 314.4 L1681.2 315.3 L1682.2 316.2 L1683.3 317.1 L1684.3 318.0 L1685.3 318.9 L1686.3 319.8 L1687.3 320.8 L1688.3 321.7 L1688.4 321.8 L1689.3 322.6 L1690.3 323.5 L1691.3 324.4 L1692.3 325.2 L1693.3 326.1 L1694.3 326.9 L1695.3 327.9 L1696.4 328.9 L1697.4 330.0 L1698.4 331.3 L1699.4 332.7 L1699.4 332.7 L1700.4 334.0 L1701.4 336.8 L1701.4 336.8 L1702.4 364.3 L1702.7 364.3 L1703.4 341.5 L1703.8 339.9 L1704.5 338.8 L1704.9 338.8 L1706.0 339.1 L1706.8 339.4 L1707.1 339.6 L1708.2 341.2 L1708.5 342.1 L1709.3 380.4 L1709.6 380.4 L1710.4 346.8 L1710.6 346.2 L1711.6 344.6 L1712.1 344.4 L1712.6 344.5 L1713.7 345.2 L1714.7 346.1 L1715.5 346.8 L1715.7 346.9 L1716.7 347.7 L1717.7 348.5 L1718.7 349.4 L1719.7 350.2 L1720.7 351.1 L1721.8 352.0 L1722.8 352.9 L1723.8 353.8 L1724.8 354.7 L1725.8 355.7 L1726.8 356.6 L1727.8 357.5 L1728.9 358.4 L1729.9 359.3 L1730.2 359.6 L1730.9 360.2 L1731.9 361.1 L1732.9 362.0 L1733.9 362.9 L1734.9 363.8 L1735.9 364.8 L1737.0 365.7 L1738.0 366.6 L1739.0 367.5 L1740.0 368.4 L1741.0 369.3 L1742.0 370.2 L1743.0 371.0 L1743.7 371.6 L1744.1 371.9 L1745.1 372.7 L1746.1 373.5 L1747.1 374.3 L1748.1 375.1 L1749.1 375.8 L1750.1 376.6 L1751.2 377.4 L1752.2 378.2 L1753.2 379.0 L1754.2 379.8 L1755.2 380.7 L1756.2 381.6 L1757.1 382.4 L1757.2 382.5 L1758.2 383.3 L1759.3 384.3 L1760.1 385.7 L1760.3 386.2 L1761.1 392.4 L1761.3 395.4 L1762.3 436.7 L1762.6 436.7 L1763.4 392.4 L1763.6 391.6 L1764.7 389.7 L1765.1 389.5 L1765.7 389.6 L1766.7 390.0 L1767.7 390.7 L1768.8 391.6 L1769.8 392.5 L1770.5 393.1 L1770.8 393.4 L1771.9 394.2 L1772.9 395.0 L1773.9 395.9 L1774.9 396.8 L1776.0 397.7 L1777.0 398.7 L1778.0 399.7 L1779.1 400.7 L1780.1 401.6 L1781.1 402.6 L1782.2 403.6 L1783.2 404.5 L1783.9 405.2 L1784.2 405.5 L1785.2 406.2 L1786.3 406.9 L1787.3 407.5 L1788.3 408.2 L1789.4 409.1 L1790.4 410.2 L1791.4 411.7 L1791.9 412.5 L1792.4 414.0 L1793.3 419.3 L1793.5 421.5 L1794.5 454.5 L1794.8 454.5 L1795.4 420.6 L1795.8 418.9 L1796.8 417.2 L1796.9 417.2 L1797.8 417.5 L1798.8 418.3 L1799.3 418.6 L1799.8 419.0 L1800.9 419.7 L1801.9 420.5 L1802.9 421.4 L1803.9 422.3 L1804.9 423.3 L1805.9 424.2 L1806.9 425.2 L1807.9 426.1 L1808.9 427.0 L1809.9 427.9 L1810.7 428.6 L1810.9 428.8 L1812.0 429.6 L1813.0 430.5 L1814.0 431.3 L1815.0 432.1 L1816.0 432.9 L1817.0 433.7 L1818.0 434.5 L1819.0 435.3 L1820.0 436.1 L1821.0 436.9 L1822.0 437.7 L1823.0 438.5 L1824.1 439.4 L1824.1 439.4 L1825.1 440.2 L1826.1 441.1 L1827.1 442.0 L1828.1 442.9 L1829.1 443.8 L1830.1 444.7 L1831.1 445.6 L1832.1 446.5 L1833.1 447.4 L1834.1 448.4 L1835.2 449.3 L1836.2 450.2 L1837.2 451.1 L1837.5 451.4 L1838.2 452.0 L1839.2 452.9 L1840.2 453.8 L1841.2 454.7 L1842.2 455.6 L1843.2 456.5 L1844.2 457.4 L1845.2 458.4 L1846.3 459.3 L1847.3 460.2 L1848.3 461.1 L1849.3 462.0 L1850.3 462.9 L1851.3 463.8" stroke="#ff0000" stroke-width="1" fill="none" stroke-linejoin="round" shape-rendering="crispEdges"/><path d="M1169.6 240.8 L1461.3 240.8 L1461.4 240.0 L1462.4 240.0 L1463.4 240.0 L1464.4 240.0 L1465.4 240.0 L1466.4 240.0 L1467.4 240.1 L1468.4 240.1 L1469.4 240.1 L1470.4 240.1 L1471.4 240.1 L1472.4 240.1 L1473.4 240.1 L1474.4 240.1 L1475.4 240.1 L1476.4 240.1 L1477.4 240.1 L1478.4 240.1 L1479.4 240.1 L1480.4 240.1 L1481.5 240.1 L1482.5 240.2 L1483.5 240.2 L1484.5 240.2 L1485.5 240.2 L1486.5 240.2 L1487.5 240.2 L1488.5 240.2 L1489.5 240.2 L1490.5 240.2 L1491.5 240.2 L1492.5 240.2 L1493.5 240.2 L1494.5 240.2 L1495.5 240.2 L1496.5 240.2 L1497.5 240.2 L1498.5 240.2 L1499.5 240.2 L1500.0 240.2 L1500.5 240.2 L1501.5 240.2 L1502.5 240.2 L1503.5 240.2 L1504.5 240.2 L1505.5 240.2 L1506.5 240.2 L1507.5 240.2 L1508.5 240.2 L1509.5 240.2 L1509.8 240.2 L1510.5 240.2 L1511.5 240.2 L1512.5 240.2 L1513.5 240.2 L1514.5 240.1 L1515.5 240.1 L1516.5 240.1 L1517.5 240.0 L1518.5 240.0 L1519.5 239.9 L1520.6 239.9 L1521.6 239.8 L1522.6 239.8 L1523.6 239.7 L1524.6 239.7 L1525.6 239.6 L1526.6 239.5 L1527.6 239.5 L1528.6 239.4 L1529.6 239.3 L1530.1 239.3 L1530.6 239.3 L1531.6 239.2 L1532.6 239.1 L1533.6 239.0 L1534.6 238.9 L1535.6 238.8 L1536.6 238.7 L1537.6 238.6 L1538.6 238.5 L1539.6 238.4 L1540.6 238.3 L1541.6 238.1 L1542.6 238.0 L1543.6 237.9 L1544.6 237.7 L1545.6 237.6 L1546.6 237.5 L1547.6 237.3 L1548.6 237.2 L1549.6 237.1 L1550.2 237.0 L1550.6 236.9 L1551.6 236.8 L1552.6 236.7 L1553.6 236.5 L1554.6 236.4 L1555.6 236.3 L1556.6 236.1 L1557.6 236.0 L1558.6 235.8 L1559.6 235.7 L1560.7 235.5 L1561.7 235.4 L1562.7 235.2 L1563.7 235.1 L1564.7 234.9 L1565.7 234.8 L1566.7 234.6 L1567.7 234.4 L1568.7 234.3 L1569.7 234.1 L1570.7 233.9 L1571.7 233.8 L1572.7 233.6 L1573.7 233.4 L1574.7 233.2 L1575.7 233.0 L1576.7 232.8 L1577.7 232.7 L1578.5 232.5 L1578.7 232.5 L1579.7 232.3 L1580.7 232.0 L1581.7 231.8 L1582.7 231.6 L1583.7 231.4 L1584.7 231.1 L1585.7 230.9 L1586.7 230.7 L1587.7 230.4 L1588.7 230.2 L1589.7 229.9 L1590.7 229.6 L1591.7 229.4 L1592.7 229.1 L1593.7 228.8 L1594.7 228.6 L1595.7 228.3 L1596.7 228.0 L1597.7 227.8 L1598.7 227.5 L1599.8 227.2 L1600.5 227.0 L1600.8 226.9 L1601.8 226.7 L1602.8 226.4 L1603.8 226.1 L1604.8 225.8 L1605.8 225.5 L1606.8 225.2 L1607.8 224.9 L1608.8 224.7 L1609.8 224.4 L1610.8 224.1 L1611.8 223.8 L1612.8 223.5 L1613.8 223.2 L1614.8 222.8 L1615.8 222.5 L1616.8 222.2 L1617.8 221.9 L1618.8 221.6 L1619.8 221.3 L1620.8 221.0 L1621.8 220.7 L1622.8 220.4 L1623.8 220.1 L1624.8 219.7 L1625.6 219.5 L1625.8 219.4 L1626.8 219.1 L1627.8 218.8 L1628.8 218.5 L1629.8 218.2 L1630.8 217.8 L1631.8 217.5 L1632.8 217.2 L1633.8 216.9 L1634.8 216.6 L1635.8 216.2 L1636.8 215.9 L1637.8 215.6 L1638.8 215.3 L1639.9 214.9 L1640.9 214.6 L1641.9 214.3 L1642.9 213.9 L1643.9 213.6 L1644.9 213.3 L1645.9 212.9 L1646.9 212.6 L1647.9 212.3 L1648.9 211.9 L1649.9 211.6 L1650.7 211.3 L1650.9 211.2 L1651.9 210.9 L1652.9 210.5 L1653.9 210.2 L1654.9 209.8 L1655.9 209.5 L1656.9 209.1 L1657.9 208.8 L1658.9 208.4 L1659.9 208.1 L1660.9 207.7 L1661.9 207.4 L1662.9 207.0 L1663.3 206.9 L1663.9 206.7 L1664.9 206.3 L1665.9 205.9 L1666.9 205.5 L1667.9 205.2 L1668.9 204.8 L1669.9 204.5 L1670.9 204.2 L1671.9 204.0 L1672.1 204.0 L1672.9 203.9 L1673.9 203.7 L1674.9 203.6 L1675.9 203.5 L1676.9 203.4 L1677.9 203.4 L1678.3 203.4 L1679.0 203.4 L1680.0 203.4 L1681.0 203.5 L1682.0 203.6 L1683.0 203.7 L1683.4 203.8 L1684.0 203.9 L1685.0 204.3 L1686.0 204.9 L1687.0 205.7 L1688.0 206.5 L1688.4 206.9 L1689.0 207.5 L1690.0 208.8 L1691.0 210.5 L1692.0 212.5 L1692.2 213.0 L1693.0 215.2 L1694.0 219.1 L1694.7 222.6 L1695.0 224.4 L1696.0 233.2 L1696.5 237.7 L1697.0 241.9 L1698.0 250.3 L1698.4 250.3 L1699.4 240.4 L1699.7 237.7 L1700.4 231.5 L1701.4 223.8 L1701.6 222.6 L1702.4 218.2 L1703.4 213.7 L1704.1 211.3 L1704.4 210.4 L1705.4 207.8 L1706.4 205.7 L1707.2 204.4 L1707.4 204.0 L1708.4 202.7 L1709.4 201.5 L1710.4 200.4 L1711.0 199.8 L1711.5 199.3 L1712.5 198.1 L1713.5 197.2 L1714.1 196.8 L1714.5 196.7 L1715.5 196.3 L1716.5 196.0 L1717.5 195.7 L1718.5 195.5 L1719.5 195.4 L1720.2 195.4 L1720.5 195.4 L1721.5 195.5 L1722.5 195.7 L1723.5 195.9 L1724.5 196.2 L1725.5 196.5 L1726.5 196.8 L1727.5 197.2 L1727.6 197.2 L1728.5 197.5 L1729.5 197.9 L1730.5 198.4 L1731.5 198.9 L1732.5 199.4 L1733.5 200.0 L1734.5 200.5 L1735.5 201.1 L1736.6 201.7 L1737.6 202.3 L1738.3 202.8 L1738.6 203.0 L1739.6 203.6 L1740.6 204.2 L1741.6 204.9 L1742.6 205.6 L1743.6 206.3 L1744.6 207.0 L1745.6 207.8 L1746.6 208.5 L1747.6 209.3 L1748.6 210.0 L1749.6 210.8 L1750.6 211.6 L1751.6 212.4 L1752.6 213.2 L1753.0 213.5 L1753.6 214.0 L1754.6 214.8 L1755.6 215.6 L1756.6 216.5 L1757.6 217.3 L1758.6 218.2 L1759.6 219.0 L1760.6 219.9 L1761.6 220.8 L1762.7 221.7 L1763.7 222.6 L1764.7 223.5 L1765.7 224.4 L1766.7 225.3 L1767.7 226.2 L1767.8 226.3 L1768.7 227.1 L1769.7 228.0 L1770.7 229.0 L1771.7 229.9 L1772.7 230.9 L1773.7 231.8 L1774.7 232.8 L1775.7 233.8 L1776.7 234.7 L1777.7 235.7 L1778.7 236.7 L1779.7 237.7 L1780.7 238.7 L1781.7 239.6 L1782.5 240.4 L1782.7 240.6 L1783.7 241.6 L1784.7 242.6 L1785.7 243.6 L1786.7 244.6 L1787.8 245.6 L1788.8 246.6 L1789.8 247.6 L1790.8 248.6 L1791.8 249.6 L1792.8 250.6 L1793.8 251.6 L1794.6 252.4 L1794.8 252.6 L1795.8 253.6 L1796.8 254.6 L1797.8 255.5 L1798.8 256.5 L1799.8 257.5 L1800.8 258.5 L1801.8 259.5 L1802.8 260.5 L1803.8 261.5 L1804.8 262.5 L1805.8 263.6 L1806.7 264.5 L1806.8 264.6 L1807.8 265.7 L1808.8 266.8 L1809.8 267.9 L1810.8 269.0 L1811.8 270.1 L1812.8 271.3 L1813.9 272.4 L1814.9 273.6 L1815.9 274.8 L1816.9 276.0 L1817.4 276.6 L1817.9 277.2 L1818.9 278.4 L1819.9 279.5 L1820.9 280.8 L1821.9 282.0 L1822.9 283.2 L1823.9 284.5 L1824.9 285.9 L1825.9 287.3 L1826.8 288.6 L1826.9 288.8 L1827.9 290.3 L1828.9 292.0 L1829.9 293.8 L1830.9 295.6 L1831.9 297.5 L1832.9 299.5 L1833.5 300.7 L1833.9 301.6 L1834.9 303.9 L1835.9 306.3 L1836.9 308.7 L1837.5 310.1 L1837.9 311.2 L1839.0 313.7 L1840.0 316.3 L1841.0 319.0 L1841.6 320.8 L1842.0 321.8 L1843.0 324.8 L1844.0 328.2 L1844.2 329.0 L1845.0 332.0 L1846.0 336.8 L1846.3 338.8 L1847.0 345.1 L1847.6 352.2 L1848.0 356.8 L1848.7 366.9 L1849.0 372.4 L1849.6 385.7 L1850.0 393.1 L1850.3 400.0 L1851.0 431.5" stroke="#0000ff" stroke-width="1" fill="none" stroke-linejoin="round" shape-rendering="crispEdges"/><path d="M1851.3 431.5 L1851.3 385.7" stroke="#0000ff" stroke-width="1.6" fill="none" stroke-linejoin="round" shape-rendering="crispEdges"/><path d="M1169.5 466.5v-10.5M1169.5 128.5v10.5 M1210.5 466.5v-4.5M1210.5 128.5v4.5 M1234.5 466.5v-4.5M1234.5 128.5v4.5 M1251.5 466.5v-4.5M1251.5 128.5v4.5 M1265.5 466.5v-4.5M1265.5 128.5v4.5 M1275.5 466.5v-4.5M1275.5 128.5v4.5 M1285.5 466.5v-4.5M1285.5 128.5v4.5 M1292.5 466.5v-4.5M1292.5 128.5v4.5 M1299.5 466.5v-4.5M1299.5 128.5v4.5 M1306.5 466.5v-10.5M1306.5 128.5v10.5 M1347.5 466.5v-4.5M1347.5 128.5v4.5 M1371.5 466.5v-4.5M1371.5 128.5v4.5 M1388.5 466.5v-4.5M1388.5 128.5v4.5 M1401.5 466.5v-4.5M1401.5 128.5v4.5 M1412.5 466.5v-4.5M1412.5 128.5v4.5 M1421.5 466.5v-4.5M1421.5 128.5v4.5 M1429.5 466.5v-4.5M1429.5 128.5v4.5 M1436.5 466.5v-4.5M1436.5 128.5v4.5 M1442.5 466.5v-10.5M1442.5 128.5v10.5 M1483.5 466.5v-4.5M1483.5 128.5v4.5 M1507.5 466.5v-4.5M1507.5 128.5v4.5 M1524.5 466.5v-4.5M1524.5 128.5v4.5 M1537.5 466.5v-4.5M1537.5 128.5v4.5 M1548.5 466.5v-4.5M1548.5 128.5v4.5 M1557.5 466.5v-4.5M1557.5 128.5v4.5 M1565.5 466.5v-4.5M1565.5 128.5v4.5 M1572.5 466.5v-4.5M1572.5 128.5v4.5 M1578.5 466.5v-10.5M1578.5 128.5v10.5 M1619.5 466.5v-4.5M1619.5 128.5v4.5 M1644.5 466.5v-4.5M1644.5 128.5v4.5 M1661.5 466.5v-4.5M1661.5 128.5v4.5 M1674.5 466.5v-4.5M1674.5 128.5v4.5 M1685.5 466.5v-4.5M1685.5 128.5v4.5 M1694.5 466.5v-4.5M1694.5 128.5v4.5 M1702.5 466.5v-4.5M1702.5 128.5v4.5 M1709.5 466.5v-4.5M1709.5 128.5v4.5 M1715.5 466.5v-10.5M1715.5 128.5v10.5 M1756.5 466.5v-4.5M1756.5 128.5v4.5 M1780.5 466.5v-4.5M1780.5 128.5v4.5 M1797.5 466.5v-4.5M1797.5 128.5v4.5 M1810.5 466.5v-4.5M1810.5 128.5v4.5 M1821.5 466.5v-4.5M1821.5 128.5v4.5 M1830.5 466.5v-4.5M1830.5 128.5v4.5 M1838.5 466.5v-4.5M1838.5 128.5v4.5 M1845.5 466.5v-4.5M1845.5 128.5v4.5 M1851.5 466.5v-10.5M1851.5 128.5v10.5 M1163.5 136.5h18.5M1857.6 136.5h-18.5 M1163.5 194.5h18.5M1857.6 194.5h-18.5 M1163.5 252.5h18.5M1857.6 252.5h-18.5 M1163.5 310.5h18.5M1857.6 310.5h-18.5 M1163.5 369.5h18.5M1857.6 369.5h-18.5 M1163.5 427.5h18.5M1857.6 427.5h-18.5 M1163.5 456.5h8.5M1857.6 456.5h-8.5 M1163.5 441.5h8.5M1857.6 441.5h-8.5 M1163.5 412.5h8.5M1857.6 412.5h-8.5 M1163.5 398.5h8.5M1857.6 398.5h-8.5 M1163.5 383.5h8.5M1857.6 383.5h-8.5 M1163.5 354.5h8.5M1857.6 354.5h-8.5 M1163.5 340.5h8.5M1857.6 340.5h-8.5 M1163.5 325.5h8.5M1857.6 325.5h-8.5 M1163.5 296.5h8.5M1857.6 296.5h-8.5 M1163.5 281.5h8.5M1857.6 281.5h-8.5 M1163.5 267.5h8.5M1857.6 267.5h-8.5 M1163.5 238.5h8.5M1857.6 238.5h-8.5 M1163.5 223.5h8.5M1857.6 223.5h-8.5 M1163.5 209.5h8.5M1857.6 209.5h-8.5 M1163.5 179.5h8.5M1857.6 179.5h-8.5 M1163.5 165.5h8.5M1857.6 165.5h-8.5 M1163.5 150.5h8.5M1857.6 150.5h-8.5" stroke="#000" stroke-width="1" fill="none" shape-rendering="crispEdges"/><rect x="1163.5" y="128.5" width="694.0999999999999" height="338.0" fill="none" stroke="#000" stroke-width="1" shape-rendering="crispEdges"/><text x="1158.6" y="142.4" font-size="17.3" text-anchor="end">120</text><text x="1158.6" y="200.4" font-size="17.3" text-anchor="end">100</text><text x="1158.6" y="258.4" font-size="17.3" text-anchor="end">80</text><text x="1158.6" y="316.4" font-size="17.3" text-anchor="end">60</text><text x="1158.6" y="375.4" font-size="17.3" text-anchor="end">40</text><text x="1158.6" y="433.4" font-size="17.3" text-anchor="end">20</text><text x="1152.5" y="489.5" font-size="17.3">10<tspan dy="-8" dx="0.5" font-size="11.5">−3</tspan></text><text x="1288.9" y="489.5" font-size="17.3">10<tspan dy="-8" dx="0.5" font-size="11.5">−2</tspan></text><text x="1425.3" y="489.5" font-size="17.3">10<tspan dy="-8" dx="0.5" font-size="11.5">−1</tspan></text><text x="1578.4" y="489.5" font-size="17.3" text-anchor="middle">1</text><text x="1714.8" y="489.5" font-size="17.3" text-anchor="middle">10</text><text x="1834.4" y="489.5" font-size="17.3">10<tspan dy="-8" dx="0.5" font-size="11.5">2</tspan></text><text x="1510" y="516.2" font-size="18" text-anchor="middle">Frequency (Hz)</text><text transform="translate(1112.3 296.0) rotate(-90)" font-size="20" text-anchor="middle">Magnitude (dB)</text><text x="1098" y="545.7" font-size="18" fill="#ff0000">*T0=29/01/2026 06:21:37</text><text x="1881.5" y="546" font-size="18" text-anchor="end">K1ASC1.txt</text><rect x="1185" y="419.3" width="434.5" height="42" fill="#000"/><rect x="1179.5" y="413.8" width="436" height="44" fill="#fff" stroke="#000"/><path d="M1196.4 424.5H1271.8" stroke="#ff0000" shape-rendering="crispEdges"/><path d="M1196.4 446.5H1271.8" stroke="#0000ff" shape-rendering="crispEdges"/><text x="1288" y="429.1" font-size="11">current_out / current_in</text><text x="1288" y="449.9" font-size="11">ASC_DHARD_P5_out(REF0) / ASC_DHARD_P5_in(REF0)</text><text x="1582.8" y="185.1" font-size="45.1" fill="#0433ff">New = HBtest</text><text x="1472.8" y="375.1" font-size="45.2" fill="#ff2600">Original</text></svg>
<svg style="left:1081px;top:559px" width="818" height="472" viewBox="1081 559 818 472" font-family="Liberation Sans, sans-serif" font-weight="bold"><rect x="1081" y="559" width="818" height="472" fill="#fff"/><path d="M1081.5 1031V559.5H1900" stroke="#8a8a8a" fill="none"/><rect x="1088" y="565" width="200" height="22" fill="#000"/><rect x="1090.5" y="562.5" width="196.5" height="23" fill="#f4f4f4" stroke="#000"/><text x="1188" y="581" font-size="19.2" text-anchor="middle">Transfer function</text><path d="M1169.5 607.5V945.5 M1306.5 607.5V945.5 M1442.5 607.5V945.5 M1578.5 607.5V945.5 M1715.5 607.5V945.5 M1851.5 607.5V945.5 M1163.5 624.5H1857.6 M1163.5 672.5H1857.6 M1163.5 720.5H1857.6 M1163.5 769.5H1857.6 M1163.5 817.5H1857.6 M1163.5 866.5H1857.6 M1163.5 914.5H1857.6" stroke="#000" stroke-width="1" stroke-dasharray="1 2" fill="none" shape-rendering="crispEdges"/><path d="M1169.5 672.5 L1299.0 672.5 L1299.1 673.3 L1334.0 673.3 L1334.1 674.2 L1335.1 674.2 L1336.1 674.2 L1337.1 674.2 L1338.1 674.2 L1339.1 674.2 L1340.1 674.2 L1341.1 674.2 L1342.1 674.2 L1343.1 674.2 L1344.1 674.2 L1345.1 674.2 L1346.1 674.2 L1347.1 674.2 L1348.1 674.2 L1349.1 674.2 L1350.1 674.2 L1351.1 674.2 L1352.1 674.2 L1353.1 674.2 L1354.1 674.2 L1355.1 674.2 L1356.1 674.2 L1357.1 674.2 L1358.1 674.2 L1359.1 674.2 L1360.1 674.2 L1361.1 674.2 L1362.1 674.2 L1363.1 674.2 L1364.1 674.2 L1365.2 674.2 L1366.2 674.2 L1367.2 674.2 L1368.2 674.2 L1369.2 674.2 L1370.2 674.2 L1371.2 674.2 L1372.2 674.2 L1373.2 674.2 L1374.2 674.2 L1375.2 674.2 L1376.2 674.2 L1377.2 674.2 L1378.2 674.2 L1379.2 674.2 L1380.2 674.2 L1381.2 674.2 L1382.2 674.2 L1382.7 674.2 L1383.2 674.2 L1384.2 674.1 L1385.2 674.1 L1386.2 673.9 L1387.2 673.8 L1388.2 673.7 L1389.2 673.5 L1390.0 673.4 L1390.2 673.4 L1391.2 673.2 L1392.2 673.1 L1393.2 672.9 L1394.2 672.8 L1395.2 672.6 L1396.2 672.4 L1397.2 672.2 L1398.2 672.0 L1399.2 671.7 L1400.2 671.4 L1400.3 671.4 L1401.2 671.1 L1402.2 670.6 L1403.2 670.0 L1404.2 669.3 L1405.0 668.8 L1405.2 668.7 L1406.2 668.0 L1407.2 667.2 L1408.2 666.4 L1409.2 665.5 L1410.2 664.7 L1411.2 663.9 L1412.2 663.1 L1412.6 662.8 L1413.2 662.3 L1414.2 661.5 L1415.2 660.7 L1416.2 659.9 L1417.2 659.2 L1418.2 658.7 L1418.8 658.4 L1419.2 658.2 L1420.2 657.8 L1421.2 657.5 L1422.2 657.3 L1422.6 657.3 L1423.2 657.4 L1424.2 658.2 L1424.5 658.4 L1425.2 660.1 L1426.1 664.0 L1426.2 665.2 L1427.0 675.4 L1427.3 677.8 L1428.3 687.2 L1428.3 687.9 L1429.1 713.0 L1429.3 717.4 L1430.1 738.8 L1430.3 741.9 L1431.1 755.2 L1431.3 756.7 L1432.3 764.0 L1432.7 765.8 L1433.3 767.3 L1434.3 769.2 L1435.2 770.0 L1435.3 770.0 L1436.3 770.3 L1437.3 770.5 L1437.7 770.5 L1438.3 770.4 L1439.3 769.7 L1440.2 769.0 L1440.3 768.9 L1441.3 768.1 L1442.3 767.2 L1443.3 766.2 L1444.3 765.3 L1445.2 764.6 L1445.3 764.5 L1446.3 763.9 L1447.3 763.2 L1448.3 762.6 L1449.3 762.0 L1450.3 761.5 L1451.3 761.0 L1452.3 760.6 L1452.7 760.4 L1453.3 760.2 L1454.3 759.8 L1455.3 759.5 L1456.3 759.2 L1457.3 758.9 L1458.3 758.7 L1459.3 758.5 L1460.3 758.3 L1460.3 758.3 L1461.3 758.2 L1462.3 758.1 L1463.3 758.0 L1464.3 757.9 L1465.3 757.8 L1466.3 757.7 L1467.3 757.7 L1467.8 757.7 L1468.3 757.7 L1469.3 757.7 L1470.3 757.8 L1471.3 757.9 L1472.3 758.0 L1473.3 758.1 L1474.3 758.2 L1475.3 758.3 L1476.3 758.5 L1477.3 758.6 L1477.9 758.7 L1478.3 758.8 L1479.3 758.9 L1480.3 759.1 L1481.3 759.4 L1482.3 759.6 L1483.3 759.9 L1484.3 760.2 L1485.3 760.5 L1486.3 760.8 L1487.3 761.0 L1487.9 761.2 L1488.4 761.3 L1489.4 761.6 L1490.4 761.9 L1491.4 762.1 L1492.4 762.4 L1493.4 762.7 L1494.4 763.0 L1495.4 763.3 L1496.4 763.6 L1497.4 764.0 L1498.0 764.2 L1498.4 764.3 L1499.4 764.7 L1500.4 765.2 L1501.4 765.6 L1502.4 766.1 L1503.4 766.6 L1504.4 767.1 L1505.4 767.6 L1506.4 768.1 L1507.4 768.7 L1508.0 769.0 L1508.4 769.2 L1509.4 769.8 L1510.4 770.3 L1511.4 770.9 L1512.4 771.5 L1513.4 772.2 L1514.4 772.8 L1515.4 773.5 L1516.4 774.1 L1517.4 774.8 L1518.1 775.3 L1518.4 775.5 L1519.4 776.2 L1520.4 777.0 L1521.4 777.7 L1522.4 778.5 L1523.4 779.3 L1524.4 780.1 L1525.4 780.9 L1526.4 781.8 L1527.4 782.7 L1528.1 783.4 L1528.4 783.7 L1529.4 784.8 L1530.4 785.9 L1531.4 787.1 L1532.4 788.3 L1533.4 789.5 L1534.4 790.8 L1535.4 792.0 L1535.6 792.2 L1536.4 793.2 L1537.4 794.4 L1538.4 795.7 L1539.4 796.9 L1540.4 798.2 L1540.7 798.5 L1541.4 799.5 L1542.4 800.9 L1543.4 802.1 L1544.4 802.9 L1544.4 802.9 L1545.4 803.4 L1545.9 803.5 L1546.4 803.3 L1547.4 802.3 L1547.9 801.6 L1548.4 800.3 L1549.4 796.2 L1550.1 792.8 L1550.5 790.6 L1551.5 782.5 L1552.0 777.8 L1552.5 773.9 L1553.5 765.1 L1553.8 762.7 L1554.5 758.7 L1555.5 754.0 L1555.7 753.3 L1556.5 751.7 L1557.5 750.2 L1558.0 749.8 L1558.5 749.6 L1559.5 749.3 L1559.5 749.3 L1560.5 749.6 L1561.5 750.4 L1562.0 750.8 L1562.5 751.1 L1563.5 752.0 L1564.5 752.9 L1565.5 753.7 L1565.8 753.9 L1566.5 754.4 L1567.5 755.0 L1568.5 755.5 L1568.9 755.5 L1569.5 755.5 L1570.5 755.5 L1571.5 755.4 L1572.5 755.3 L1573.3 755.2 L1573.5 755.2 L1574.5 754.7 L1575.5 754.2 L1575.8 754.2 L1576.5 754.5 L1577.5 755.5 L1577.7 755.8 L1578.5 757.8 L1579.0 758.9 L1579.5 759.6 L1580.5 760.4 L1580.8 740.1 L1581.5 713.0 L1582.5 693.2 L1582.9 693.5 L1583.9 698.2 L1584.9 701.8 L1585.2 702.4 L1585.9 703.7 L1587.0 705.1 L1588.0 706.2 L1589.0 707.2 L1589.6 708.0 L1590.0 708.6 L1591.0 710.0 L1592.0 711.4 L1593.0 712.9 L1594.1 714.5 L1594.7 715.5 L1595.1 716.1 L1596.1 717.7 L1597.1 719.3 L1598.1 721.1 L1599.1 723.1 L1599.7 724.3 L1600.2 725.4 L1601.2 728.4 L1602.2 731.9 L1602.5 733.1 L1603.2 736.1 L1603.5 737.6 L1604.2 741.1 L1605.2 746.4 L1606.0 751.4 L1606.2 753.2 L1607.3 762.7 L1607.9 770.2 L1608.3 775.4 L1609.1 789.1 L1609.3 792.1 L1610.3 808.5 L1610.6 808.5 L1610.8 649.2 L1611.6 667.8 L1611.8 671.6 L1612.8 687.0 L1612.9 687.9 L1613.8 695.0 L1614.8 700.7 L1615.4 704.2 L1615.8 707.0 L1616.8 714.0 L1617.8 720.2 L1617.9 720.6 L1618.8 725.0 L1619.8 729.2 L1620.8 733.1 L1621.0 733.8 L1621.8 737.1 L1622.8 740.9 L1623.8 744.5 L1624.8 747.6 L1624.8 747.7 L1625.8 750.6 L1626.9 753.3 L1627.9 755.8 L1628.9 758.1 L1629.8 760.2 L1629.9 760.3 L1630.9 762.3 L1631.9 764.2 L1632.9 766.0 L1633.9 767.9 L1634.1 768.3 L1634.9 769.9 L1635.9 772.1 L1636.9 774.3 L1637.9 776.6 L1638.9 778.9 L1639.9 781.1 L1640.9 783.2 L1641.9 785.1 L1642.3 785.8 L1642.9 786.8 L1643.9 788.5 L1644.9 790.0 L1645.9 791.6 L1646.9 793.0 L1647.9 794.4 L1648.9 795.8 L1649.9 797.1 L1650.9 798.3 L1651.9 799.5 L1652.6 800.2 L1652.9 800.6 L1653.9 801.6 L1654.9 802.6 L1655.9 803.6 L1657.0 804.5 L1658.0 805.4 L1659.0 806.2 L1660.0 807.0 L1661.0 807.9 L1662.0 808.7 L1662.9 809.5 L1663.0 809.6 L1664.0 810.4 L1665.0 811.2 L1666.0 812.1 L1667.0 812.9 L1668.0 813.7 L1669.0 814.5 L1670.0 815.3 L1671.0 816.1 L1672.0 816.8 L1673.0 817.6 L1673.2 817.7 L1674.0 818.3 L1675.0 819.0 L1676.0 819.7 L1677.0 820.3 L1678.0 821.0 L1679.0 821.6 L1680.0 822.3 L1681.0 822.9 L1682.0 823.6 L1683.0 824.2 L1684.0 824.9 L1685.0 825.6 L1685.5 825.9 L1686.0 826.3 L1687.1 827.0 L1688.1 827.6 L1689.1 828.3 L1690.1 829.0 L1691.1 829.8 L1692.1 830.6 L1693.1 831.4 L1693.8 832.1 L1694.1 832.4 L1695.1 833.3 L1696.1 834.4 L1697.1 835.8 L1697.9 837.2 L1698.1 837.6 L1699.1 840.1 L1700.1 844.2 L1700.3 845.4 L1701.1 854.2 L1701.6 864.0 L1702.1 883.5 L1702.3 883.5 L1702.5 766.3 L1703.6 785.8 L1704.4 822.8 L1704.7 825.9 L1705.8 831.9 L1706.5 835.2 L1706.9 837.4 L1708.0 844.4 L1708.1 845.4 L1709.1 872.6 L1709.4 872.6 L1709.6 752.3 L1710.6 773.5 L1710.6 773.8 L1711.4 802.3 L1711.6 806.3 L1712.6 818.3 L1712.7 818.7 L1713.6 822.4 L1714.6 824.9 L1715.3 825.9 L1715.7 826.3 L1716.7 827.4 L1717.7 828.3 L1718.7 829.0 L1719.7 829.6 L1720.7 830.2 L1721.7 830.7 L1722.5 831.1 L1722.7 831.2 L1723.7 831.7 L1724.7 832.2 L1725.8 832.6 L1726.8 833.1 L1727.8 833.5 L1728.8 833.9 L1729.8 834.2 L1730.8 834.6 L1731.8 834.9 L1732.8 835.2 L1732.8 835.2 L1733.8 835.5 L1734.8 835.8 L1735.9 836.0 L1736.9 836.3 L1737.9 836.5 L1738.9 836.7 L1739.9 836.9 L1740.9 837.2 L1741.9 837.4 L1742.9 837.6 L1743.9 837.9 L1744.9 838.2 L1745.2 838.3 L1746.0 838.5 L1747.0 838.9 L1748.0 839.2 L1749.0 839.5 L1750.0 839.9 L1751.0 840.4 L1752.0 840.9 L1753.0 841.5 L1753.4 841.7 L1754.0 842.1 L1755.0 843.0 L1756.1 844.2 L1757.1 845.7 L1757.5 846.5 L1758.1 847.6 L1759.1 850.7 L1760.0 855.7 L1760.1 856.6 L1761.1 883.5 L1761.4 883.5 L1761.8 761.1 L1762.6 812.5 L1762.8 815.5 L1763.7 822.8 L1763.8 823.8 L1764.7 831.1 L1764.8 831.4 L1765.8 833.8 L1766.8 835.5 L1767.8 836.8 L1768.8 837.6 L1769.8 838.3 L1769.8 838.3 L1770.9 838.9 L1771.9 839.5 L1772.9 839.9 L1773.9 840.3 L1774.9 840.7 L1775.9 841.0 L1776.9 841.3 L1777.9 841.6 L1778.9 841.9 L1779.9 842.3 L1780.1 842.4 L1780.9 842.7 L1781.9 843.0 L1782.9 843.4 L1783.9 843.7 L1784.9 844.1 L1786.0 844.6 L1787.0 845.2 L1787.3 845.4 L1788.0 846.0 L1789.0 847.3 L1790.0 849.3 L1790.8 851.6 L1791.0 852.3 L1792.0 861.1 L1792.5 868.1 L1793.0 879.9 L1793.5 896.9 L1794.0 917.4 L1794.2 917.4 L1794.4 796.1 L1795.4 806.0 L1795.6 808.4 L1796.4 825.0 L1796.6 826.9 L1797.4 831.8 L1798.5 835.0 L1798.6 835.2 L1799.5 836.4 L1800.5 837.6 L1801.5 838.5 L1802.5 839.3 L1803.5 839.8 L1804.6 840.2 L1804.8 840.3 L1805.6 840.6 L1806.6 840.9 L1807.6 841.1 L1808.6 841.4 L1809.6 841.6 L1810.7 841.8 L1811.7 842.0 L1812.7 842.1 L1813.7 842.2 L1814.7 842.4 L1815.1 842.4 L1815.7 842.5 L1816.8 842.6 L1817.8 842.7 L1818.8 842.8 L1819.8 842.8 L1820.8 842.9 L1821.8 843.0 L1822.8 843.1 L1823.9 843.1 L1824.9 843.2 L1825.9 843.3 L1826.9 843.3 L1827.9 843.4 L1828.9 843.4 L1830.0 843.5 L1831.0 843.5 L1832.0 843.6 L1833.0 843.6 L1834.0 843.7 L1835.0 843.8 L1835.7 843.8 L1836.1 843.8 L1837.1 843.9 L1838.1 843.9 L1839.1 844.0 L1840.1 844.0 L1841.1 844.1 L1842.2 844.2 L1843.2 844.2 L1844.2 844.3 L1845.2 844.3 L1846.2 844.4 L1847.2 844.4 L1848.3 844.5 L1849.3 844.5 L1850.3 844.6 L1851.3 844.6" stroke="#ff0000" stroke-width="1" fill="none" stroke-linejoin="round" shape-rendering="crispEdges"/><path d="M1233.3 672.0 L1313.8 672.0 L1313.9 671.2 L1381.0 671.2 L1381.1 670.4 L1411.0 670.2 L1411.3 669.5 L1412.3 669.5 L1413.3 669.5 L1414.3 669.4 L1415.3 669.4 L1416.3 669.4 L1417.3 669.3 L1418.3 669.3 L1419.3 669.3 L1420.3 669.2 L1421.3 669.2 L1422.3 669.2 L1423.3 669.1 L1424.3 669.1 L1425.3 669.1 L1426.3 669.0 L1427.3 669.0 L1428.3 668.9 L1429.3 668.9 L1430.3 668.8 L1431.3 668.8 L1431.4 668.8 L1432.3 668.8 L1433.3 668.7 L1434.3 668.7 L1435.3 668.6 L1436.3 668.6 L1437.3 668.5 L1438.3 668.5 L1439.3 668.4 L1440.3 668.3 L1441.3 668.3 L1442.3 668.2 L1442.4 668.2 L1443.3 668.1 L1444.3 668.1 L1445.3 668.0 L1446.3 667.9 L1447.3 667.8 L1448.3 667.7 L1449.3 667.7 L1450.3 667.6 L1451.3 667.5 L1452.3 667.4 L1453.3 667.3 L1454.3 667.2 L1455.3 667.1 L1456.3 667.0 L1457.3 666.9 L1458.3 666.8 L1459.3 666.7 L1460.3 666.6 L1461.3 666.5 L1462.3 666.4 L1463.3 666.2 L1464.3 666.1 L1465.3 666.0 L1466.4 665.9 L1467.4 665.8 L1468.4 665.7 L1469.1 665.6 L1469.4 665.6 L1470.4 665.5 L1471.4 665.3 L1472.4 665.2 L1473.4 665.1 L1474.4 665.0 L1475.4 664.9 L1476.4 664.7 L1477.4 664.6 L1478.4 664.5 L1479.4 664.3 L1480.4 664.2 L1481.4 664.1 L1482.4 663.9 L1483.4 663.8 L1484.4 663.7 L1485.4 663.5 L1486.4 663.4 L1487.4 663.2 L1488.4 663.1 L1489.4 662.9 L1490.4 662.8 L1491.4 662.6 L1492.4 662.5 L1492.9 662.4 L1493.4 662.3 L1494.4 662.2 L1495.4 662.0 L1496.4 661.8 L1497.4 661.7 L1498.4 661.5 L1499.4 661.3 L1500.4 661.2 L1501.4 661.0 L1502.4 660.8 L1503.4 660.6 L1504.4 660.4 L1505.4 660.3 L1506.4 660.1 L1507.4 659.9 L1508.4 659.7 L1509.4 659.5 L1510.4 659.3 L1511.4 659.1 L1512.4 658.9 L1513.0 658.8 L1513.4 658.7 L1514.4 658.5 L1515.4 658.3 L1516.4 658.1 L1517.4 657.9 L1518.4 657.7 L1519.4 657.5 L1520.4 657.3 L1521.4 657.1 L1522.4 656.9 L1523.4 656.7 L1524.4 656.5 L1525.4 656.3 L1526.4 656.1 L1527.4 655.8 L1528.4 655.6 L1529.4 655.4 L1530.4 655.2 L1531.4 655.0 L1532.4 654.7 L1533.4 654.5 L1534.4 654.3 L1535.4 654.0 L1536.4 653.8 L1537.4 653.6 L1538.1 653.4 L1538.4 653.3 L1539.4 653.1 L1540.4 652.8 L1541.4 652.6 L1542.4 652.3 L1543.4 652.0 L1544.4 651.8 L1545.4 651.5 L1546.4 651.2 L1547.4 650.9 L1548.4 650.6 L1549.4 650.3 L1550.4 650.0 L1551.4 649.8 L1552.4 649.5 L1553.4 649.2 L1554.4 648.9 L1555.4 648.6 L1556.4 648.3 L1557.4 648.0 L1558.4 647.8 L1559.4 647.5 L1560.4 647.2 L1561.4 647.0 L1562.4 646.7 L1563.3 646.5 L1563.4 646.5 L1564.4 646.2 L1565.4 646.0 L1566.4 645.7 L1567.4 645.5 L1568.4 645.3 L1569.4 645.0 L1570.4 644.8 L1571.4 644.6 L1572.4 644.4 L1573.4 644.1 L1574.4 643.9 L1575.4 643.7 L1576.5 643.5 L1577.5 643.3 L1578.5 643.0 L1578.6 643.0 L1579.5 642.8 L1580.5 642.6 L1581.5 642.3 L1582.5 642.1 L1583.5 641.9 L1584.5 641.6 L1585.5 641.4 L1586.5 641.2 L1587.5 641.0 L1588.5 640.7 L1589.5 640.5 L1590.5 640.3 L1591.5 640.1 L1592.5 640.0 L1593.4 639.8 L1593.5 639.8 L1594.5 639.6 L1595.5 639.5 L1596.5 639.3 L1597.5 639.2 L1598.5 639.0 L1599.5 638.9 L1600.5 638.8 L1601.5 638.7 L1602.5 638.6 L1603.5 638.5 L1603.5 638.5 L1604.5 638.4 L1605.5 638.4 L1606.5 638.3 L1607.5 638.3 L1608.5 638.2 L1609.5 638.2 L1610.5 638.2 L1611.0 638.2 L1611.5 638.2 L1612.5 638.2 L1613.5 638.2 L1614.5 638.3 L1615.5 638.3 L1616.5 638.4 L1617.5 638.4 L1618.5 638.5 L1618.5 638.5 L1619.5 638.6 L1620.5 638.7 L1621.5 638.8 L1622.5 639.0 L1623.5 639.2 L1624.5 639.4 L1625.5 639.7 L1626.5 639.9 L1627.5 640.1 L1628.5 640.4 L1628.6 640.4 L1629.5 640.6 L1630.5 640.9 L1631.5 641.2 L1632.5 641.5 L1633.5 641.9 L1634.5 642.2 L1635.5 642.6 L1636.5 642.9 L1637.5 643.3 L1637.5 643.3 L1638.5 643.7 L1639.5 644.1 L1640.5 644.4 L1641.5 644.8 L1642.5 645.2 L1643.5 645.7 L1644.5 646.1 L1645.5 646.6 L1646.5 647.1 L1647.5 647.7 L1647.6 647.7 L1648.5 648.2 L1649.5 648.9 L1650.5 649.7 L1651.5 650.4 L1652.5 651.2 L1653.5 652.1 L1654.5 652.9 L1655.1 653.4 L1655.5 653.8 L1656.5 654.6 L1657.5 655.4 L1658.5 656.3 L1659.5 657.2 L1660.5 658.2 L1661.5 659.1 L1662.5 660.1 L1662.7 660.3 L1663.5 661.2 L1664.5 662.2 L1665.5 663.3 L1666.5 664.5 L1667.5 665.7 L1668.5 666.9 L1669.5 668.2 L1670.2 669.1 L1670.5 669.6 L1671.5 671.0 L1672.5 672.4 L1673.5 674.0 L1674.5 675.6 L1675.5 677.3 L1676.5 679.1 L1676.5 679.2 L1677.5 681.1 L1678.5 683.3 L1679.5 685.6 L1680.5 688.0 L1681.5 690.4 L1681.5 690.5 L1682.5 693.3 L1683.5 696.2 L1684.5 699.3 L1685.5 702.5 L1686.5 705.5 L1686.6 705.7 L1687.6 708.9 L1688.6 712.1 L1689.6 715.5 L1690.3 718.1 L1690.6 719.0 L1691.6 723.2 L1692.6 726.9 L1692.8 727.5 L1693.6 729.3 L1694.4 730.4 L1694.6 730.4 L1695.6 729.3 L1696.2 727.5 L1696.6 719.4 L1696.9 708.0 L1697.6 693.8 L1697.8 686.7 L1698.4 647.7 L1698.6 645.7 L1699.6 639.4 L1699.7 638.9 L1700.6 636.0 L1701.0 635.5 L1701.6 635.9 L1702.6 637.6 L1702.6 637.7 L1703.6 640.4 L1704.6 644.3 L1705.4 647.7 L1705.6 648.4 L1706.6 652.7 L1707.6 657.3 L1708.6 661.8 L1709.1 664.0 L1709.6 665.8 L1710.6 669.6 L1711.6 673.2 L1712.6 676.7 L1712.9 677.9 L1713.6 680.4 L1714.6 684.1 L1715.6 687.8 L1716.6 691.3 L1716.7 691.7 L1717.6 694.5 L1718.6 697.6 L1719.6 700.6 L1720.6 703.5 L1721.6 706.5 L1721.7 706.8 L1722.6 709.5 L1723.6 712.5 L1724.6 715.5 L1725.6 718.5 L1726.6 721.2 L1726.7 721.5 L1727.6 723.7 L1728.6 726.1 L1729.6 728.4 L1730.6 730.7 L1731.6 732.9 L1732.6 735.1 L1733.0 736.0 L1733.6 737.3 L1734.6 739.6 L1735.6 741.9 L1736.6 744.1 L1736.9 744.7 L1737.6 746.2 L1738.6 748.3 L1739.6 750.5 L1740.6 752.6 L1741.6 754.8 L1742.6 756.9 L1743.6 758.9 L1744.6 761.0 L1745.6 762.9 L1746.6 764.8 L1747.6 766.6 L1748.6 768.3 L1749.3 769.4 L1749.6 769.9 L1750.6 771.4 L1751.6 772.9 L1752.6 774.3 L1753.6 775.7 L1754.6 777.0 L1755.6 778.3 L1756.6 779.6 L1757.6 780.8 L1758.6 782.0 L1759.6 783.2 L1760.6 784.3 L1761.6 785.4 L1761.6 785.4 L1762.6 786.5 L1763.6 787.5 L1764.6 788.5 L1765.6 789.5 L1766.6 790.5 L1767.6 791.4 L1768.6 792.3 L1769.6 793.2 L1770.6 794.1 L1771.6 795.0 L1772.6 795.9 L1773.6 796.8 L1774.0 797.1 L1774.6 797.7 L1775.6 798.5 L1776.6 799.4 L1777.6 800.3 L1778.6 801.2 L1779.6 802.0 L1780.6 802.9 L1781.6 803.8 L1782.6 804.6 L1783.6 805.4 L1784.6 806.2 L1785.6 807.0 L1786.6 807.8 L1787.6 808.6 L1788.6 809.3 L1789.6 810.0 L1790.4 810.5 L1790.6 810.7 L1791.6 811.3 L1792.6 812.0 L1793.6 812.6 L1794.6 813.2 L1795.6 813.8 L1796.7 814.4 L1797.7 814.9 L1798.7 815.5 L1799.7 816.0 L1800.7 816.6 L1801.7 817.1 L1802.7 817.6 L1803.7 818.1 L1804.7 818.6 L1805.7 819.1 L1806.7 819.6 L1806.9 819.7 L1807.7 820.1 L1808.7 820.5 L1809.7 821.0 L1810.7 821.4 L1811.7 821.9 L1812.7 822.3 L1813.7 822.7 L1814.7 823.2 L1815.7 823.6 L1816.7 824.0 L1817.7 824.4 L1818.7 824.8 L1819.7 825.2 L1820.7 825.5 L1821.7 825.9 L1822.7 826.3 L1823.3 826.5 L1823.7 826.6 L1824.7 827.0 L1825.7 827.4 L1826.7 827.7 L1827.7 828.1 L1828.7 828.4 L1829.7 828.8 L1830.7 829.1 L1831.7 829.4 L1832.7 829.7 L1833.7 830.0 L1834.7 830.3 L1835.7 830.6 L1836.7 830.9 L1837.7 831.1 L1837.7 831.1 L1838.7 831.3 L1839.7 831.6 L1840.7 831.8 L1841.7 832.0 L1842.7 832.2 L1843.7 832.4 L1844.7 832.6 L1845.7 832.8 L1846.7 832.9 L1847.7 833.1 L1848.7 833.2 L1849.7 833.4 L1850.7 833.5" stroke="#0000ff" stroke-width="1" fill="none" stroke-linejoin="round" shape-rendering="crispEdges"/><path d="M1851.0 833.5 L1851.0 659.0" stroke="#0000ff" stroke-width="1.4" fill="none" stroke-linejoin="round" shape-rendering="crispEdges"/><path d="M1169.5 945.5v-10.5M1169.5 607.5v10.5 M1210.5 945.5v-4.5M1210.5 607.5v4.5 M1234.5 945.5v-4.5M1234.5 607.5v4.5 M1251.5 945.5v-4.5M1251.5 607.5v4.5 M1265.5 945.5v-4.5M1265.5 607.5v4.5 M1275.5 945.5v-4.5M1275.5 607.5v4.5 M1285.5 945.5v-4.5M1285.5 607.5v4.5 M1292.5 945.5v-4.5M1292.5 607.5v4.5 M1299.5 945.5v-4.5M1299.5 607.5v4.5 M1306.5 945.5v-10.5M1306.5 607.5v10.5 M1347.5 945.5v-4.5M1347.5 607.5v4.5 M1371.5 945.5v-4.5M1371.5 607.5v4.5 M1388.5 945.5v-4.5M1388.5 607.5v4.5 M1401.5 945.5v-4.5M1401.5 607.5v4.5 M1412.5 945.5v-4.5M1412.5 607.5v4.5 M1421.5 945.5v-4.5M1421.5 607.5v4.5 M1429.5 945.5v-4.5M1429.5 607.5v4.5 M1436.5 945.5v-4.5M1436.5 607.5v4.5 M1442.5 945.5v-10.5M1442.5 607.5v10.5 M1483.5 945.5v-4.5M1483.5 607.5v4.5 M1507.5 945.5v-4.5M1507.5 607.5v4.5 M1524.5 945.5v-4.5M1524.5 607.5v4.5 M1537.5 945.5v-4.5M1537.5 607.5v4.5 M1548.5 945.5v-4.5M1548.5 607.5v4.5 M1557.5 945.5v-4.5M1557.5 607.5v4.5 M1565.5 945.5v-4.5M1565.5 607.5v4.5 M1572.5 945.5v-4.5M1572.5 607.5v4.5 M1578.5 945.5v-10.5M1578.5 607.5v10.5 M1619.5 945.5v-4.5M1619.5 607.5v4.5 M1644.5 945.5v-4.5M1644.5 607.5v4.5 M1661.5 945.5v-4.5M1661.5 607.5v4.5 M1674.5 945.5v-4.5M1674.5 607.5v4.5 M1685.5 945.5v-4.5M1685.5 607.5v4.5 M1694.5 945.5v-4.5M1694.5 607.5v4.5 M1702.5 945.5v-4.5M1702.5 607.5v4.5 M1709.5 945.5v-4.5M1709.5 607.5v4.5 M1715.5 945.5v-10.5M1715.5 607.5v10.5 M1756.5 945.5v-4.5M1756.5 607.5v4.5 M1780.5 945.5v-4.5M1780.5 607.5v4.5 M1797.5 945.5v-4.5M1797.5 607.5v4.5 M1810.5 945.5v-4.5M1810.5 607.5v4.5 M1821.5 945.5v-4.5M1821.5 607.5v4.5 M1830.5 945.5v-4.5M1830.5 607.5v4.5 M1838.5 945.5v-4.5M1838.5 607.5v4.5 M1845.5 945.5v-4.5M1845.5 607.5v4.5 M1851.5 945.5v-10.5M1851.5 607.5v10.5 M1163.5 624.5h18.5M1857.6 624.5h-18.5 M1163.5 672.5h18.5M1857.6 672.5h-18.5 M1163.5 720.5h18.5M1857.6 720.5h-18.5 M1163.5 769.5h18.5M1857.6 769.5h-18.5 M1163.5 817.5h18.5M1857.6 817.5h-18.5 M1163.5 866.5h18.5M1857.6 866.5h-18.5 M1163.5 914.5h18.5M1857.6 914.5h-18.5 M1163.5 943.5h8.5M1857.6 943.5h-8.5 M1163.5 933.5h8.5M1857.6 933.5h-8.5 M1163.5 923.5h8.5M1857.6 923.5h-8.5 M1163.5 904.5h8.5M1857.6 904.5h-8.5 M1163.5 894.5h8.5M1857.6 894.5h-8.5 M1163.5 885.5h8.5M1857.6 885.5h-8.5 M1163.5 875.5h8.5M1857.6 875.5h-8.5 M1163.5 856.5h8.5M1857.6 856.5h-8.5 M1163.5 846.5h8.5M1857.6 846.5h-8.5 M1163.5 836.5h8.5M1857.6 836.5h-8.5 M1163.5 827.5h8.5M1857.6 827.5h-8.5 M1163.5 807.5h8.5M1857.6 807.5h-8.5 M1163.5 798.5h8.5M1857.6 798.5h-8.5 M1163.5 788.5h8.5M1857.6 788.5h-8.5 M1163.5 778.5h8.5M1857.6 778.5h-8.5 M1163.5 759.5h8.5M1857.6 759.5h-8.5 M1163.5 749.5h8.5M1857.6 749.5h-8.5 M1163.5 740.5h8.5M1857.6 740.5h-8.5 M1163.5 730.5h8.5M1857.6 730.5h-8.5 M1163.5 711.5h8.5M1857.6 711.5h-8.5 M1163.5 701.5h8.5M1857.6 701.5h-8.5 M1163.5 691.5h8.5M1857.6 691.5h-8.5 M1163.5 682.5h8.5M1857.6 682.5h-8.5 M1163.5 662.5h8.5M1857.6 662.5h-8.5 M1163.5 653.5h8.5M1857.6 653.5h-8.5 M1163.5 643.5h8.5M1857.6 643.5h-8.5 M1163.5 633.5h8.5M1857.6 633.5h-8.5 M1163.5 614.5h8.5M1857.6 614.5h-8.5" stroke="#000" stroke-width="1" fill="none" shape-rendering="crispEdges"/><rect x="1163.5" y="607.5" width="694.0999999999999" height="338.0" fill="none" stroke="#000" stroke-width="1" shape-rendering="crispEdges"/><text x="1158.6" y="630.4" font-size="17.3" text-anchor="end">50</text><text x="1158.6" y="678.4" font-size="17.3" text-anchor="end">0</text><text x="1158.6" y="726.4" font-size="17.3" text-anchor="end">−50</text><text x="1158.6" y="775.4" font-size="17.3" text-anchor="end">−100</text><text x="1158.6" y="823.4" font-size="17.3" text-anchor="end">−150</text><text x="1158.6" y="872.4" font-size="17.3" text-anchor="end">−200</text><text x="1158.6" y="920.4" font-size="17.3" text-anchor="end">−250</text><text x="1152.5" y="968.5" font-size="17.3">10<tspan dy="-8" dx="0.5" font-size="11.5">−3</tspan></text><text x="1288.9" y="968.5" font-size="17.3">10<tspan dy="-8" dx="0.5" font-size="11.5">−2</tspan></text><text x="1425.3" y="968.5" font-size="17.3">10<tspan dy="-8" dx="0.5" font-size="11.5">−1</tspan></text><text x="1578.4" y="968.5" font-size="17.3" text-anchor="middle">1</text><text x="1714.8" y="968.5" font-size="17.3" text-anchor="middle">10</text><text x="1834.4" y="968.5" font-size="17.3">10<tspan dy="-8" dx="0.5" font-size="11.5">2</tspan></text><text x="1510" y="995.2" font-size="18" text-anchor="middle">Frequency (Hz)</text><text transform="translate(1112.3 776.5) rotate(-90)" font-size="20" text-anchor="middle">Phase (deg)</text><text x="1098" y="1024.7" font-size="18" fill="#ff0000">*T0=29/01/2026 06:21:37</text><text x="1881.5" y="1025" font-size="18" text-anchor="end">K1ASC1.txt</text><rect x="1185" y="898.3" width="434.5" height="42" fill="#000"/><rect x="1179.5" y="892.8" width="436" height="44" fill="#fff" stroke="#000"/><path d="M1196.4 903.5H1271.8" stroke="#ff0000" shape-rendering="crispEdges"/><path d="M1196.4 925.5H1271.8" stroke="#0000ff" shape-rendering="crispEdges"/><text x="1288" y="908.1" font-size="11">current_out / current_in</text><text x="1288" y="928.9" font-size="11">ASC_DHARD_P5_out(REF0) / ASC_DHARD_P5_in(REF0)</text></svg>
</div></body></html>
